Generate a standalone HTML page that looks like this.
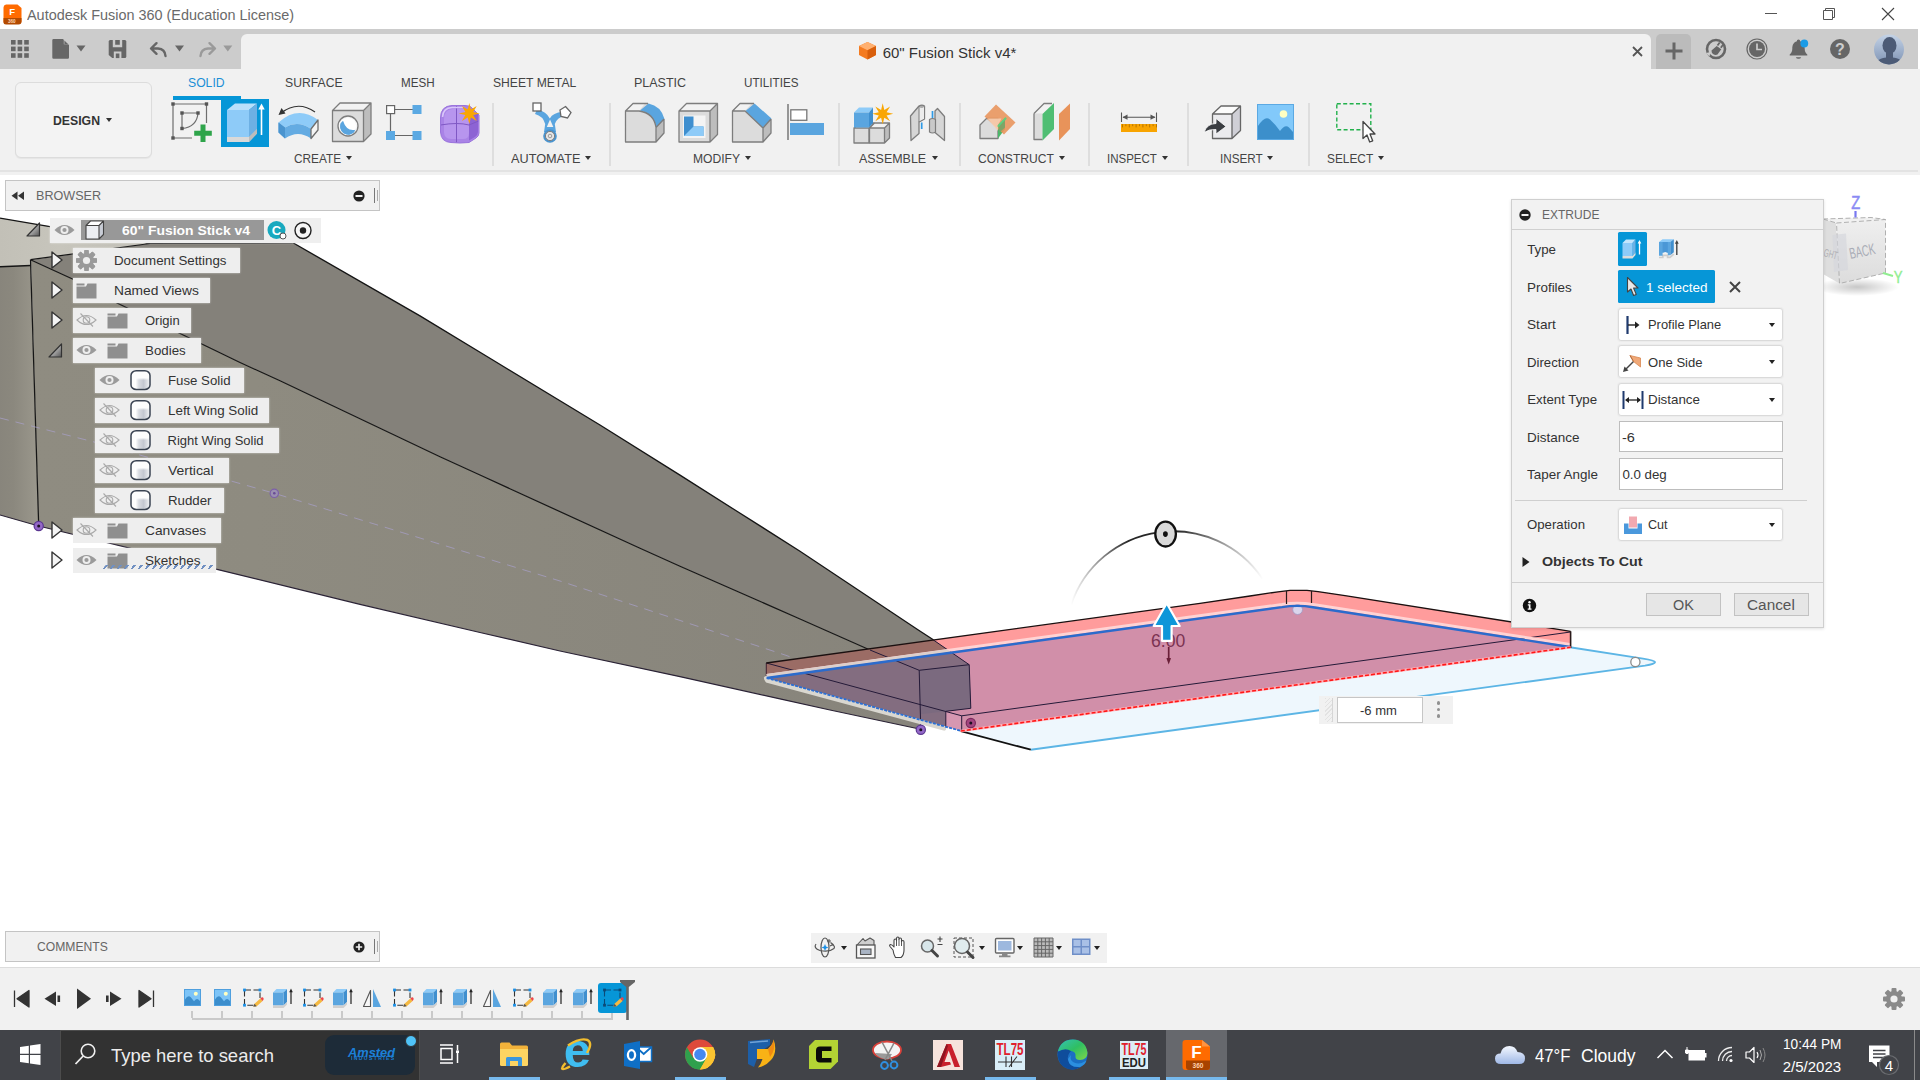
<!DOCTYPE html>
<html lang="en"><head><meta charset="utf-8"><title>Autodesk Fusion 360 (Education License)</title>
<style>
*{box-sizing:border-box;margin:0;padding:0}
html,body{width:1920px;height:1080px;overflow:hidden;background:#fff}
body{position:relative;font-family:"Liberation Sans",Arial,sans-serif;font-size:13px;color:#333}
.abs{position:absolute}
.t{position:absolute;white-space:nowrap;line-height:1}
svg{position:absolute;overflow:visible}
#titlebar{left:0;top:0;width:1920px;height:29px;background:#fff}
#graybar{left:0;top:29px;width:1918px;height:40px;background:#cccccc}
#tab{left:241px;top:34px;width:1410px;height:36px;background:#f1f1f1;border-radius:6px 6px 0 0}
#plusbtn{left:1656px;top:34px;width:35px;height:35px;background:#bbbbbb;border-radius:5px 5px 0 0}
#toolbar{left:0;top:69px;width:1920px;height:106px;background:#f1f1f1}
#tbline{left:0;top:170px;width:1918px;height:2px;background:#e3e3e3}
#design{left:15px;top:82px;width:137px;height:76px;border:1px solid #dcdcdc;border-radius:6px;background:#f3f3f3;box-shadow:0 1px 1px rgba(0,0,0,.05)}
.tabname{position:absolute;top:76px;font-size:13.5px;line-height:14px;color:#444;white-space:nowrap;transform:scaleX(.9);transform-origin:0 50%}
.grp{position:absolute;top:152px;font-size:13.5px;line-height:14px;color:#444;white-space:nowrap;transform:scaleX(.9);transform-origin:0 50%}
.sep{position:absolute;top:103px;width:2px;height:63px;background:#dedede}
.dd{position:absolute;width:0;height:0;margin-left:.3px;border-left:3.7px solid transparent;border-right:3.7px solid transparent;border-top:4.6px solid #333}
#timeline{left:0;top:967px;width:1920px;height:63px;background:#f1f1f1;border-top:1px solid #dcdcdc}
#taskbar{left:0;top:1030px;width:1920px;height:50px;background:#414348}
.panelhdr{position:absolute;background:#f1f1f1;border:1px solid #c4c4c4}
.row{position:absolute;height:25px;background:#eeeeee;box-shadow:0 0 2px rgba(255,255,255,.6)}
.rowt{position:absolute;font-size:13.8px;line-height:16px;color:#333;white-space:nowrap;transform:scaleX(.94);transform-origin:0 50%}
#dlg{left:1511px;top:199px;width:313px;height:429px;background:#f2f2f2;border:1px solid #cfcfcf;box-shadow:0 1px 3px rgba(0,0,0,.12)}
.lbl{position:absolute;left:15px;font-size:13px;line-height:16px;color:#333;white-space:nowrap;transform:scaleX(.96);transform-origin:0 50%}
.ddbox{position:absolute;left:106.3px;width:165px;height:33.4px;background:#fff;border:1px solid #dadada;border-radius:3px;box-shadow:0 0 0 1px #ececec}
  .inbox{position:absolute;left:106.6px;width:164.2px;height:31.6px;background:#fff;border:1px solid #bdbdbd}
.ddt{position:absolute;left:29px;top:8px;font-size:13px;line-height:16px;color:#333;white-space:nowrap;transform:scaleX(.96);transform-origin:0 50%}
.btn{position:absolute;top:393.2px;height:23.2px;background:#e6e6e6;border:1px solid #c2c2c2;font-size:15px;line-height:21px;text-align:center;color:#555}
.tbt{position:absolute;color:#fff;white-space:nowrap}
</style></head>
<body>
<!-- p_scene -->
<svg class="abs" style="left:0;top:0" width="1920" height="1080" viewBox="0 0 1920 1080">
<defs>
<linearGradient id="gTop" x1="0" y1="0" x2="1" y2="0"><stop offset="0" stop-color="#c2c0b7"/><stop offset="0.4" stop-color="#c7c5bc"/><stop offset="1" stop-color="#c0beb5"/></linearGradient>
<linearGradient id="gLow" x1="0" y1="0" x2="1" y2="0"><stop offset="0" stop-color="#8f8c81"/><stop offset="0.25" stop-color="#8e8b80"/><stop offset="1" stop-color="#87847b"/></linearGradient>
<linearGradient id="gLeft" x1="0" y1="0" x2="1" y2="0"><stop offset="0" stop-color="#88857c"/><stop offset="0.35" stop-color="#8b887e"/><stop offset="1" stop-color="#9b988d"/></linearGradient>
<linearGradient id="arcfade" gradientUnits="userSpaceOnUse" x1="1071" y1="0" x2="1263" y2="0"><stop offset="0" stop-color="#000" stop-opacity="0"/><stop offset="0.3" stop-color="#000" stop-opacity=".85"/><stop offset="0.55" stop-color="#000" stop-opacity=".85"/><stop offset="1" stop-color="#000" stop-opacity="0"/></linearGradient>

<clipPath id="cBody"><polygon points="0.0,218.0 50.0,226.6 150.0,243.5 292.5,242.5 420.0,315.8 492.8,360.0 600.0,425.0 680.0,475.1 735.0,510.0 800.0,551.2 918.3,630.0 933.3,639.7 969.2,664.7 970.8,708.3 945.8,711.3 945.8,726.8 921.0,729.7 917.0,728.5 830.0,710.0 780.0,698.9 680.0,676.7 560.0,651.0 480.0,632.5 360.0,604.3 216.0,569.2 38.7,526.0 0.0,515.0"/></clipPath>
<clipPath id="cProfile"><polygon points="766.7,678.0 1297.5,605.0 1570.0,647.0 960.8,730.8"/></clipPath>
</defs>
<polygon points="0.0,264.0 30.7,264.0 38.7,526.0 0.0,515.0" fill="url(#gLeft)"/>
<polygon points="0.0,218.0 50.0,226.6 150.0,243.5 30.5,259.7 30.7,265.6 0.0,266.8" fill="url(#gTop)"/>
<polygon points="31.0,260.0 150.0,243.5 292.5,242.5 420.0,315.8 492.8,360.0 600.0,425.0 680.0,475.1 735.0,510.0 800.0,551.2 918.3,630.0 933.3,639.7 969.2,664.7 919.2,670.3 896.7,661.7 870.0,650.0 800.0,619.0 680.0,566.2 640.0,548.3 480.0,475.0 440.0,456.7 280.0,380.8 240.0,362.5 208.0,347.0 117.0,303.0 72.5,279.0 31.0,260.0" fill="#84817a"/>
<polygon points="31.0,260.0 72.5,279.0 117.0,303.0 208.0,347.0 240.0,362.5 280.0,380.8 440.0,456.7 480.0,475.0 640.0,548.3 680.0,566.2 800.0,619.0 870.0,650.0 896.7,661.7 919.2,670.3 920.8,729.7 921.0,729.7 917.0,728.5 830.0,710.0 780.0,698.9 680.0,676.7 560.0,651.0 480.0,632.5 360.0,604.3 216.0,569.2 38.7,526.0" fill="url(#gLow)"/>
<polyline points="292.5,242.5 420.0,315.8 492.8,360.0 600.0,425.0 680.0,475.1 735.0,510.0 800.0,551.2 918.3,630.0 933.3,639.7" fill="none" stroke="#151515" stroke-width="1.35"/>
<polyline points="31.0,260.0 72.5,279.0 117.0,303.0 208.0,347.0 240.0,362.5 280.0,380.8 440.0,456.7 480.0,475.0 640.0,548.3 680.0,566.2 800.0,619.0 870.0,650.0" fill="none" stroke="#151515" stroke-width="1.25"/>
<polyline points="0.0,515.0 38.7,526.0 216.0,569.2 360.0,604.3 480.0,632.5 560.0,651.0 680.0,676.7 780.0,698.9 830.0,710.0 917.0,728.5 921.0,729.7" fill="none" stroke="#2a2235" stroke-width="1.2"/>
<polyline points="0.0,218.0 50.0,226.6 150.0,243.5 30.5,259.7" fill="none" stroke="#151515" stroke-width="1.25"/>
<polyline points="0.0,266.8 30.7,265.6" fill="none" stroke="#151515" stroke-width="1.5"/>
<polyline points="30.5,259.7 38.7,526.0" fill="none" stroke="#151515" stroke-width="1.25"/>
<polyline points="150.0,243.5 292.5,243.0" fill="none" stroke="#222" stroke-width="1.2"/>
<polyline points="0.0,418.0 93.0,441.7 274.3,493.3 560.0,581.0 785.0,655.0 895.0,695.0 940.0,712.0" fill="none" stroke="#a79fc6" stroke-opacity=".75" stroke-width="1" stroke-dasharray="9 7"/>
<circle cx="274.3" cy="493.3" r="4.2" fill="#9a8fb0" stroke="#7c5fa8" stroke-width="1.2"/><circle cx="274.3" cy="493.3" r="1.3" fill="#6a4c96"/>
<path d="M960.8,731 L1570,647.3 L1643,658.6 Q1666,662 1645,665.6 L1030.8,749.7 Z" fill="#eef7fd"/>
<path d="M1570,647.3 L1643,658.6 Q1666,662 1645,665.6 L1030.8,749.7" fill="none" stroke="#5cb5e5" stroke-width="1.9"/>
<line x1="960.8" y1="731.2" x2="1030.8" y2="749.7" stroke="#111" stroke-width="1.8"/>
<circle cx="1635.4" cy="662" r="4.6" fill="#fff" stroke="#8a8a8a" stroke-width="1.3"/>
<polygon points="766.3,663.0 1200.0,603.3 1250.0,596.0 1278.0,591.8 1290.0,590.4 1307.0,590.4 1318.0,591.6 1345.0,595.6 1570.6,631.3 1570.0,647.0 1297.5,605.0 766.7,678.0" fill="#ff9c9c"/>
<polygon points="766.7,678.0 1297.5,605.0 1570.0,647.0 960.8,730.8" fill="#d18fa9"/>
<g clip-path="url(#cBody)">
<polygon points="766.3,663.0 1200.0,603.3 1250.0,596.0 1278.0,591.8 1290.0,590.4 1307.0,590.4 1318.0,591.6 1345.0,595.6 1570.6,631.3 1570.0,647.0 1297.5,605.0 766.7,678.0" fill="#9b6c65"/>
<polygon points="766.7,678.0 1297.5,605.0 1570.0,647.0 960.8,730.8" fill="#836d80"/>
</g>
<polygon points="919.2,670.3 969.2,664.7 970.8,708.3 945.8,711.3 920.0,714.3" fill="#7b6a7f"/>
<polygon points="945.8,711.3 961.7,715.8 961.7,730.5 945.8,726.0" fill="#d697b1"/>
<polyline points="933.0,639.7 969.2,664.7 970.8,708.3 945.8,711.3" fill="none" stroke="#241a38" stroke-width="1"/>
<polyline points="870.0,650.0 919.2,670.3 969.2,664.7" fill="none" stroke="#241a38" stroke-width="1"/>
<polyline points="919.2,670.3 920.8,729.7" fill="none" stroke="#241a38" stroke-width="1"/>
<polyline points="945.8,711.3 945.8,726.0" fill="none" stroke="#241a38" stroke-width="1"/>
<polyline points="961.7,715.8 961.7,730.5" fill="none" stroke="#241a38" stroke-width="1"/>
<polyline points="766.3,663.0 961.7,715.8 1570.6,632.0" fill="none" stroke="#241a38" stroke-width="1"/>
<polyline points="766.3,663.0 766.3,677.0" fill="none" stroke="#3a2030" stroke-width="1"/>
<path d="M766.7,678 L1282,607.1 Q1297.5,604.6 1313,607.2 L1570,647" fill="none" stroke="#ffd3d3" stroke-width="3" transform="translate(0,-2.6)"/>
<g clip-path="url(#cBody)"><polyline points="766.7,675.6 1297.5,602.6" fill="none" stroke="#dccfcb" stroke-width="3.2"/></g>
<polyline points="766.2,678.3 767.5,680.6 921.0,722.0 944.0,728.3" fill="none" stroke="#d9d7d0" stroke-width="4.6" stroke-linecap="round" stroke-linejoin="round"/>
<circle cx="1297.6" cy="609.6" r="4.9" fill="#dad5ec" stroke="#a79bc4" stroke-width=".9"/>
<path d="M766.7,678 L1282,607.1 Q1297.5,604.6 1313,607.2 L1570,647" fill="none" stroke="#2b6bcc" stroke-width="2.4" stroke-linejoin="round"/>
<polyline points="766.7,678.0 960.8,730.8" fill="none" stroke="#2b6fd4" stroke-width="1.8" stroke-dasharray="3 1.2"/>
<polyline points="766.3,663.0 1200.0,603.3 1250.0,596.0 1278.0,591.8 1290.0,590.4 1307.0,590.4 1318.0,591.6 1345.0,595.6 1570.6,631.3" fill="none" stroke="#1a1010" stroke-width="1.3" stroke-linejoin="round"/>
<line x1="1286.5" y1="591" x2="1286.5" y2="604" stroke="#2a1a1a" stroke-width="1.2"/><line x1="1311.5" y1="591" x2="1311.5" y2="603" stroke="#2a1a1a" stroke-width="1.2"/>
<line x1="1570.6" y1="631.3" x2="1570.6" y2="648" stroke="#2a1a1a" stroke-width="1.6"/>
<line x1="960.8" y1="731" x2="1570.6" y2="647.3" stroke="#ffb0b8" stroke-width="2.6"/>
<line x1="960.8" y1="731" x2="1570.6" y2="647.3" stroke="#ff1818" stroke-width="1.6" stroke-dasharray="4 2"/>
<circle cx="38.7" cy="526" r="4.6" fill="#9468c8" stroke="#5a3590" stroke-width="1.2"/><circle cx="38.7" cy="526" r="1.5" fill="#1a1020"/>
<circle cx="920.8" cy="729.7" r="4.6" fill="#9468c8" stroke="#5a3590" stroke-width="1.2"/><circle cx="920.8" cy="729.7" r="1.5" fill="#1a1020"/>
<circle cx="970.8" cy="723" r="4.6" fill="#a2457f" stroke="#7a2a5c" stroke-width="1.2"/><circle cx="970.8" cy="723" r="1.5" fill="#1a1020"/>
<path d="M1071,605 A107.7,107.7 0 0 1 1262.5,578.8" fill="none" stroke="url(#arcfade)" stroke-width="1.8"/>
<ellipse cx="1165.6" cy="534.1" rx="10.3" ry="12.4" fill="#d9d9d9" stroke="#111" stroke-width="2.3"/><ellipse cx="1165.4" cy="534.1" rx="2.4" ry="2.8" fill="#111"/>
<text x="1151" y="646.8" font-family="Liberation Sans,Arial,sans-serif" font-size="17.6" fill="#7b3352">6.00</text>
<path d="M1168.7,647 L1168.7,661.5 M1167.2,658 L1168.7,662 L1170.2,658" stroke="#6a1f38" stroke-width="1.7" fill="none"/>
<path d="M1166.7,603.2 L1179.7,626 L1171.6,626 L1171.6,640.8 L1162,640.8 L1162,626 L1153.7,626 Z" fill="#0e96d9" stroke="#fff" stroke-width="2.2" stroke-linejoin="round"/>
</svg>
<div class="abs" style="left:1319px;top:696.1px;width:134px;height:27.7px;background:#f1f1f1"></div>
<div class="abs" style="left:1324.5px;top:698px;width:8.5px;height:24px;background:repeating-linear-gradient(135deg,#e2e2e2 0 1px,#f1f1f1 1px 3px);border-right:1.6px solid #d6d6d6"></div>
<div class="abs" style="left:1336.7px;top:697.2px;width:86.3px;height:25.6px;background:#fff;border:1.2px solid #c6c6c6"></div>
<div class="t" style="left:1360.20px;top:703.56px;font-size:13.6px;color:#333;transform:scaleX(0.9603);transform-origin:0 50%;">-6 mm</div>
<div class="abs" style="left:1436.7px;top:701.2px;width:3.6px;height:3.6px;border-radius:50%;background:#919191"></div>
<div class="abs" style="left:1436.7px;top:707.7px;width:3.6px;height:3.6px;border-radius:50%;background:#919191"></div>
<div class="abs" style="left:1436.7px;top:714.2px;width:3.6px;height:3.6px;border-radius:50%;background:#919191"></div>
<!-- p_chrome -->
<div class="abs" id="titlebar"></div>
<svg class="abs" style="left:3px;top:4px" width="19" height="21" viewBox="0 0 19 21"><path d="M3,0.5 h11.5 l4,3.5 v13 a3,3 0 0 1 -3,3 h-12.5 a2.5,2.5 0 0 1 -2.5,-2.5 v-14 a3,3 0 0 1 2.5,-3 z" fill="#ff6b00"/><path d="M0.5,14 h18 v3.5 a3,3 0 0 1 -3,3 h-12.5 a2.5,2.5 0 0 1 -2.5,-2.5 z" fill="#b34a00"/><text x="6.2" y="11" font-family="Liberation Sans,Arial,sans-serif" font-size="9.5" font-weight="bold" fill="#fff">F</text><text x="5" y="19.3" font-family="Liberation Sans,Arial,sans-serif" font-size="4.6" font-weight="bold" fill="#ffd9b8">360</text></svg>
<div class="t" style="left:27.00px;top:7.23px;font-size:15.5px;color:#6a6a6a;transform:scaleX(0.9305);transform-origin:0 50%;">Autodesk Fusion 360 (Education License)</div>
<svg class="abs" style="left:1760px;top:4px" width="140" height="20" viewBox="0 0 140 20"><path d="M5,9.5 h12" stroke="#555" stroke-width="1"/><path d="M63.5,6.5 h9 v9 h-9 z M65.5,6.5 v-2 h9 v9 h-2" fill="none" stroke="#555" stroke-width="1"/><path d="M122,4 l12,12 M134,4 l-12,12" stroke="#444" stroke-width="1.1"/></svg>
<div class="abs" id="graybar"></div>
<div class="abs" id="tab"></div>
<div class="abs" id="plusbtn"></div>
<svg class="abs" style="left:0px;top:0px" width="250" height="70" viewBox="0 0 250 70"><rect x="11.0" y="40.0" width="4.6" height="4.6" fill="#666"/><rect x="11.0" y="46.6" width="4.6" height="4.6" fill="#666"/><rect x="11.0" y="53.2" width="4.6" height="4.6" fill="#666"/><rect x="17.6" y="40.0" width="4.6" height="4.6" fill="#666"/><rect x="17.6" y="46.6" width="4.6" height="4.6" fill="#666"/><rect x="17.6" y="53.2" width="4.6" height="4.6" fill="#666"/><rect x="24.2" y="40.0" width="4.6" height="4.6" fill="#666"/><rect x="24.2" y="46.6" width="4.6" height="4.6" fill="#666"/><rect x="24.2" y="53.2" width="4.6" height="4.6" fill="#666"/><path d="M53.5,39 h9.5 l6,6 v12.5 a1.2,1.2 0 0 1 -1.2,1.2 h-14.3 a1.2,1.2 0 0 1 -1.2,-1.2 v-17.3 a1.2,1.2 0 0 1 1.2,-1.2 z" fill="#666"/><path d="M63.8,39.3 v5 h5 z" fill="#ccc"/><path d="M64.4,40.4 v3.6 h3.6 z" fill="#666"/><path d="M76.5,45.5 h9 l-4.5,6 z" fill="#666"/><path d="M110.2,40 h14.6 a1.5,1.5 0 0 1 1.5,1.5 v15 a1.5,1.5 0 0 1 -1.5,1.5 h-12.6 l-3.5,-3 v-13.5 a1.5,1.5 0 0 1 1.5,-1.5 z" fill="#666"/><path d="M112.8,40 v7.2 h9.4 v-7.2 h-2.4 v4.8 h-4.6 v-4.8 z" fill="#ccc"/><rect x="113.8" y="51.5" width="7.6" height="6.6" fill="#ccc"/><rect x="115.8" y="53.5" width="3.6" height="4.6" fill="#666"/><path d="M156.5,43.2 l-5.5,5.3 l5.5,5.3 M151.5,48.5 h6.5 q7,0.5 7.5,7.5" fill="none" stroke="#666" stroke-width="2.4" stroke-linecap="round" stroke-linejoin="round"/><path d="M175,45.5 h9 l-4.5,6 z" fill="#666"/><path d="M209.5,43.2 l5.5,5.3 l-5.5,5.3 M214.5,48.5 h-6.5 q-7,0.5 -7.5,7.5" fill="none" stroke="#9a9a9a" stroke-width="2.4" stroke-linecap="round" stroke-linejoin="round"/><path d="M223.3,45.5 h9 l-4.5,6 z" fill="#9a9a9a"/></svg>
<svg class="abs" style="left:858px;top:41px" width="20" height="20" viewBox="0 0 20 20"><polygon points="9.5,1 18,5 18,14 9.5,18.5 1,14 1,5" fill="#f47b20"/><polygon points="9.5,1 18,5 9.5,9.3 1,5" fill="#ffb070"/><polygon points="9.5,9.3 18,5 18,14 9.5,18.5" fill="#d85f0c"/></svg>
<div class="t" style="left:882.70px;top:44.67px;font-size:15px;color:#333;">60&quot; Fusion Stick v4*</div>
<svg class="abs" style="left:1630px;top:44px" width="15" height="15" viewBox="0 0 15 15"><path d="M3,3 l9,9 M12,3 l-9,9" stroke="#555" stroke-width="1.8"/></svg>
<svg class="abs" style="left:1664px;top:41px" width="20" height="20" viewBox="0 0 20 20"><path d="M10,1.5 v17 M1.5,10 h17" stroke="#666" stroke-width="3"/></svg>
<svg class="abs" style="left:1704px;top:37px" width="24" height="24" viewBox="0 0 24 24"><circle cx="12" cy="12" r="9" fill="none" stroke="#666" stroke-width="2.6"/><path d="M7.5,13.5 a4.2,4.2 0 0 0 6,4 l3.8,-5.2 l-4.6,-3.4 z" fill="#666"/><path d="M13.5,8.5 l2.2,-3 M16.8,10.8 l2.2,-3" stroke="#666" stroke-width="1.8"/><path d="M2,16 l4.5,-1 l-1,4.5 z" fill="#ccc"/></svg>
<svg class="abs" style="left:1745px;top:37px" width="24" height="24" viewBox="0 0 24 24"><circle cx="12" cy="12" r="10" fill="none" stroke="#666" stroke-width="1.2"/><circle cx="12" cy="12" r="8" fill="#666"/><path d="M12,6.5 v6 h5" fill="none" stroke="#ccc" stroke-width="1.7"/></svg>
<svg class="abs" style="left:1786px;top:37px" width="26" height="26" viewBox="0 0 26 26"><path d="M12.5,2.5 a1.6,1.6 0 0 1 1.6,1.8 c3.5,1 4.6,4 4.6,7.5 c0,3 1.2,4.4 2.6,5.6 v1.2 h-17.6 v-1.2 c1.4,-1.200 2.600,-2.600 2.600,-5.600 c0,-3.500 1.100,-6.500 4.600,-7.500 a1.600,1.600 0 0 1 1.600,-1.800 z" fill="#666"/><path d="M9.8,20.200 a2.800,2.200 0 0 0 5.400,0 z" fill="#666"/><circle cx="18.300" cy="6.500" r="3.900" fill="#1b9be6"/></svg>
<svg class="abs" style="left:1828px;top:37px" width="24" height="24" viewBox="0 0 24 24"><circle cx="12" cy="12" r="10" fill="#666"/><text x="12" y="17.600" text-anchor="middle" font-family="Liberation Sans,Arial,sans-serif" font-weight="bold" font-size="16" fill="#ccc">?</text></svg>
<svg class="abs" style="left:1873px;top:34px" width="32" height="32" viewBox="0 0 32 32"><defs><linearGradient id="av" x1="0" y1="0" x2="0" y2="1"><stop offset="0" stop-color="#c3d2e6"/><stop offset="1" stop-color="#7e93b4"/></linearGradient><clipPath id="avc"><circle cx="16" cy="15.500" r="15"/></clipPath></defs><circle cx="16" cy="15.500" r="15" fill="url(#av)"/><g clip-path="url(#avc)"><ellipse cx="16.500" cy="11.500" rx="7" ry="8.500" fill="#4c5b76"/><rect x="13" y="17" width="7" height="8" fill="#4c5b76"/><path d="M3,32 c0,-7 6,-8.500 13.500,-8.500 s13.500,1.500 13.500,8.500 z" fill="#4c5b76"/></g></svg>
<div class="abs" id="toolbar"></div><div class="abs" id="tbline"></div>
<div class="abs" id="design"></div>
<div class="t" style="left:53.00px;top:113.61px;font-size:13.5px;color:#333;font-weight:bold;transform:scaleX(0.9081);transform-origin:0 50%;">DESIGN</div>
<div class="dd" style="left:106px;top:118px;border-top-color:#333"></div>
<div class="t" style="left:188.30px;top:76.21px;font-size:13.5px;color:#1a8fd6;transform:scaleX(0.9025);transform-origin:0 50%;">SOLID</div>
<div class="t" style="left:285.40px;top:76.21px;font-size:13.5px;color:#444;transform:scaleX(0.9028);transform-origin:0 50%;">SURFACE</div>
<div class="t" style="left:401.30px;top:76.21px;font-size:13.5px;color:#444;transform:scaleX(0.8637);transform-origin:0 50%;">MESH</div>
<div class="t" style="left:493.00px;top:76.21px;font-size:13.5px;color:#444;transform:scaleX(0.8996);transform-origin:0 50%;">SHEET METAL</div>
<div class="t" style="left:633.80px;top:76.21px;font-size:13.5px;color:#444;transform:scaleX(0.9245);transform-origin:0 50%;">PLASTIC</div>
<div class="t" style="left:743.80px;top:76.21px;font-size:13.5px;color:#444;transform:scaleX(0.8649);transform-origin:0 50%;">UTILITIES</div>
<div class="abs" style="left:172.5px;top:95.500px;width:68px;height:4px;background:#0696d7"></div>
<div class="abs" style="left:221px;top:99px;width:48px;height:47.500px;background:#0696d7"></div>
<div class="t" style="left:294.40px;top:152.31px;font-size:13.5px;color:#444;transform:scaleX(0.8755);transform-origin:0 50%;">CREATE</div>
<div class="dd" style="left:346px;top:156px;border-top-color:#333"></div>
<div class="t" style="left:511.00px;top:152.31px;font-size:13.5px;color:#444;transform:scaleX(0.9404);transform-origin:0 50%;">AUTOMATE</div>
<div class="dd" style="left:585px;top:156px;border-top-color:#333"></div>
<div class="t" style="left:692.50px;top:152.31px;font-size:13.5px;color:#444;transform:scaleX(0.8965);transform-origin:0 50%;">MODIFY</div>
<div class="dd" style="left:745px;top:156px;border-top-color:#333"></div>
<div class="t" style="left:859.20px;top:152.31px;font-size:13.5px;color:#444;transform:scaleX(0.9230);transform-origin:0 50%;">ASSEMBLE</div>
<div class="dd" style="left:931.5px;top:156px;border-top-color:#333"></div>
<div class="t" style="left:978.00px;top:152.31px;font-size:13.5px;color:#444;transform:scaleX(0.8956);transform-origin:0 50%;">CONSTRUCT</div>
<div class="dd" style="left:1059px;top:156px;border-top-color:#333"></div>
<div class="t" style="left:1106.70px;top:152.31px;font-size:13.5px;color:#444;transform:scaleX(0.8518);transform-origin:0 50%;">INSPECT</div>
<div class="dd" style="left:1161.5px;top:156px;border-top-color:#333"></div>
<div class="t" style="left:1220.30px;top:152.31px;font-size:13.5px;color:#444;transform:scaleX(0.8649);transform-origin:0 50%;">INSERT</div>
<div class="dd" style="left:1267px;top:156px;border-top-color:#333"></div>
<div class="t" style="left:1326.70px;top:152.31px;font-size:13.5px;color:#444;transform:scaleX(0.8792);transform-origin:0 50%;">SELECT</div>
<div class="dd" style="left:1377.5px;top:156px;border-top-color:#333"></div>
<div class="sep" style="left:491.5px"></div>
<div class="sep" style="left:609px"></div>
<div class="sep" style="left:838px"></div>
<div class="sep" style="left:959px"></div>
<div class="sep" style="left:1088px"></div>
<div class="sep" style="left:1187px"></div>
<div class="sep" style="left:1308px"></div>
<svg class="abs" style="left:170px;top:101px" width="46" height="46" viewBox="0 0 46 46"><path d="M3,3 H36.500 M3,3 V37 M36.500,3 V22 M3,37 H22" fill="none" stroke="#6e6e6e" stroke-width="1.200"/><path d="M12,12 H28 M12,12 V27.500 M28,12 Q27,26 12,27.500" fill="none" stroke="#6e6e6e" stroke-width="1.200"/><rect x="1.3" y="1.3" width="3.400" height="3.400" fill="#555"/><rect x="34.8" y="1.3" width="3.400" height="3.400" fill="#555"/><rect x="1.3" y="35.3" width="3.400" height="3.400" fill="#555"/><rect x="10.3" y="10.3" width="3.400" height="3.400" fill="#555"/><rect x="26.3" y="10.3" width="3.400" height="3.400" fill="#555"/><rect x="10.3" y="25.8" width="3.400" height="3.400" fill="#555"/><path d="M30.500,23.500 h5 v6.300 h6.300 v5 h-6.300 v6.300 h-5 v-6.300 h-6.300 v-5 h6.300 z" fill="#2ea44a"/></svg>
<svg class="abs" style="left:221px;top:99px" width="48" height="48" viewBox="0 0 48 48"><polygon points="6,11 14,4.500 36,4.500 28,11" fill="#b9e0fb"/><polygon points="28,11 36,4.500 36,30 28,38" fill="#6db0e4"/><rect x="6" y="11" width="22" height="27" fill="#8ecbf8"/><polygon points="6,38 28,38 36,30 36,34.500 28,43 6,43" fill="#d9d9d9"/><polygon points="28,38 36,30 36,34.500 28,43" fill="#bcbcbc"/><path d="M40.500,36 V9" stroke="#fff" stroke-width="1.600"/><path d="M37.300,10.500 L40.500,4.500 L43.700,10.500 Z" fill="#fff"/></svg>
<svg class="abs" style="left:276px;top:103px" width="46" height="40" viewBox="0 0 46 40"><path d="M5,10 Q22,-3 39,9" fill="none" stroke="#333" stroke-width="1.200"/><path d="M2.500,12 L9.500,10.500 L5.500,5 Z" fill="#333"/><path d="M2.500,19.500 Q22,2 42,17 L35,26 Q22,17 9,24.500 Z" fill="#8ecbf8"/><path d="M2.500,19.500 L9,24.500 Q22,17 35,26 L35,35.500 Q22,26.500 9,35.500 L2.500,29.500 Z" fill="#64abe2"/><path d="M2.500,19.500 L9,24.500 V35.500 L2.500,29.500 Z" fill="#4a94cf"/><path d="M35,26 L42,17 V27 L35,35.500 Z" fill="#f4f4f4" stroke="#6e6e6e" stroke-width="1.300" stroke-linejoin="round"/></svg>
<svg class="abs" style="left:330px;top:100px" width="46" height="46" viewBox="0 0 46 46"><polygon points="2.5,10.5 10.0,3.0 41.0,3.0 33.5,10.5" fill="#f2f2f2"/><polygon points="33.5,10.5 41.0,3.0 41.0,34.0 33.5,41.5" fill="#bdbdbd"/><rect x="2.5" y="10.5" width="31" height="31" fill="#dcdcdc"/><path d="M2.5,10.5 h31 v31 h-31 Z M2.5,10.5 l7.5,-7.5 h31 l-7.5,7.5 M41.0,3.0 v31 l-7.5,7.5" fill="none" stroke="#7d7d7d" stroke-width="1.3" stroke-linejoin="round"/><circle cx="18" cy="26" r="10" fill="#f6f6f6" stroke="#7d7d7d" stroke-width="1.300"/><circle cx="18" cy="26" r="8" fill="#fff"/><path d="M11.500,21.500 a8,8 0 0 0 13.800,9.500 a9,9 0 0 1 -13.800,-9.500 z" fill="#5aa5df"/><path d="M11,23 a7.600,7.600 0 0 0 14.500,6.800 q-9,2 -12.500,-9 z" fill="#5aa5df"/></svg>
<svg class="abs" style="left:384px;top:103px" width="40" height="40" viewBox="0 0 40 40"><path d="M6.500,6.500 H33 M6.500,6.500 V32.500 M6.500,32.500 H33" fill="none" stroke="#666" stroke-width="1.200"/><rect x="2.600" y="2.600" width="8" height="8" fill="#fff" stroke="#666" stroke-width="1.200"/><rect x="28.500" y="2" width="9" height="9" fill="#5ba9e3"/><rect x="2" y="28" width="9" height="9" fill="#5ba9e3"/><rect x="28.500" y="28" width="9" height="9" fill="#5ba9e3"/></svg>
<svg class="abs" style="left:438px;top:100px" width="46" height="46" viewBox="0 0 46 46"><path d="M2.500,18 Q2.500,6 14,5.500 L27,5.500 Q33,5.500 35,9 L41,15 L41,33 Q41,36 38,38 L31,42.500 Q22,43.500 13,42.500 Q3,42 2.500,32 Z" fill="#a983e6"/><path d="M6,19 Q6,9.500 15,9 L27,9 Q31,9.500 31,14 L31,33 Q31,39 25,39 L13,39 Q6,39 6,32 Z" fill="#b795ee"/><path d="M31,17 L40,13 L40,32 Q40,35 37,37 L31,40.500 Z" fill="#8d63d4"/><path d="M18.500,6 V42.500 M2.500,25 Q20,22 31,25 L40.500,21" fill="none" stroke="#7f58c4" stroke-width="1"/><path d="M4.500,17 Q5,8 14,7.500 L25,7.500" fill="none" stroke="#d9c6fa" stroke-width="1.600"/><path d="M2.500,18 Q2.500,6 14,5.500 L27,5.500 Q33,5.500 35,9 L41,15 L41,33 Q41,36 38,38 L31,42.500 Q22,43.500 13,42.500 Q3,42 2.500,32 Z" fill="none" stroke="#9a74dc" stroke-width="1"/><polygon points="31.3,3.0 32.9,9.6 38.7,6.1 35.2,11.9 41.8,13.5 35.2,15.1 38.7,20.9 32.9,17.4 31.3,24.0 29.7,17.4 23.9,20.9 27.4,15.1 20.8,13.5 27.4,11.9 23.9,6.1 29.7,9.6" fill="#f9a602"/></svg>
<svg class="abs" style="left:530px;top:100px" width="46" height="46" viewBox="0 0 46 46"><path d="M7,9.500 Q16.500,11.500 19.800,18.500 Q23,12.500 32.500,12 L34.500,16 Q27,17.500 24.800,24 L26,32 H14 L15.200,24 Q13,16 5,14 Z" fill="#5aa5df"/><path d="M20,19.500 L23.300,27 L16.800,27 Z" fill="#f1f1f1"/><circle cx="20" cy="36" r="6.800" fill="#4a94cf"/><circle cx="20" cy="36" r="4.600" fill="#e6e6e6" stroke="#7d7d7d" stroke-width="1"/><circle cx="20" cy="36" r="1.800" fill="none" stroke="#888" stroke-width=".8"/><rect x="3" y="3" width="8" height="8" fill="#fff" stroke="#666" stroke-width="1.300"/><polygon points="35.500,6.500 41,12.500 37.500,18 31,16.500 30,10" fill="#fff" stroke="#666" stroke-width="1.300"/></svg>
<svg class="abs" style="left:623px;top:100px" width="46" height="46" viewBox="0 0 46 46"><polygon points="2.500,11 10,3.500 26,3.500 41,18 41,33 33,42 2.500,42" fill="#dcdcdc"/><polygon points="33,27 41,18 41,33 33,42" fill="#bdbdbd"/><polygon points="2.500,11 10,3.500 22,3.500 16,11" fill="#f2f2f2"/><path d="M17,10.500 L25.500,3.500 Q38,6 41.500,19 L33.500,27.500 Q31,14 17,10.500 Z" fill="#5aa5df"/><path d="M2.500,11 L10,3.500 H25 M41,19 V33 L33,42 H2.500 V11 H16 Q31,13 33,27.500 V42 M33,27.500 L41,19" fill="none" stroke="#7d7d7d" stroke-width="1.300" stroke-linejoin="round"/></svg>
<svg class="abs" style="left:676px;top:100px" width="46" height="46" viewBox="0 0 46 46"><polygon points="3,11 10.5,3.5 41.5,3.5 34,11" fill="#f2f2f2"/><polygon points="34,11 41.5,3.5 41.5,34.5 34,42" fill="#bdbdbd"/><rect x="3" y="11" width="31" height="31" fill="#dcdcdc"/><path d="M3,11 h31 v31 h-31 Z M3,11 l7.5,-7.5 h31 l-7.5,7.5 M41.5,3.5 v31 l-7.5,7.5" fill="none" stroke="#7d7d7d" stroke-width="1.3" stroke-linejoin="round"/><rect x="7" y="15.500" width="22.500" height="22.500" fill="#f4f4f4"/><polygon points="8,16.500 17.500,16.500 17.500,26.500 27.500,26.500 27.500,36 8,36" fill="#3f8fcf"/><polygon points="8,36 17.500,26.500 27.500,26.500 27.500,36" fill="#8ecbf8"/></svg>
<svg class="abs" style="left:730px;top:100px" width="46" height="46" viewBox="0 0 46 46"><polygon points="2.500,11 10,3.500 23,3.500 41,19 41,33 33,42 2.500,42" fill="#dcdcdc"/><polygon points="33,28 41,19 41,33 33,42" fill="#bdbdbd"/><polygon points="2.500,11 10,3.500 22,3.500 14.500,11" fill="#f2f2f2"/><polygon points="15.500,11 24.500,3.500 41.500,18.500 32.500,28" fill="#5aa5df"/><path d="M2.500,11 L10,3.500 H24 M41,19 V33 L33,42 H2.500 V11 H15 L33,28 V42 M33,28 L41,19" fill="none" stroke="#7d7d7d" stroke-width="1.300" stroke-linejoin="round"/></svg>
<svg class="abs" style="left:785px;top:102px" width="42" height="42" viewBox="0 0 42 42"><path d="M3,2 V38" stroke="#777" stroke-width="1.500"/><rect x="5.800" y="7.800" width="16" height="10.500" fill="#fff" stroke="#777" stroke-width="1.300"/><rect x="5" y="21" width="34" height="12" fill="#5aa5df"/></svg>
<svg class="abs" style="left:851px;top:99px" width="46" height="46" viewBox="0 0 46 46"><polygon points="3,29 8,24 23,24 18,29" fill="#f2f2f2"/><polygon points="18,29 23,24 23,39 18,44" fill="#bdbdbd"/><rect x="3" y="29" width="15" height="15" fill="#dcdcdc"/><path d="M3,29 h15 v15 h-15 Z M3,29 l5,-5 h15 l-5,5 M23,24 v15 l-5,5" fill="none" stroke="#7d7d7d" stroke-width="1.3" stroke-linejoin="round"/><polygon points="18.5,29 23.5,24 38.5,24 33.5,29" fill="#f2f2f2"/><polygon points="33.5,29 38.5,24 38.5,39 33.5,44" fill="#bdbdbd"/><rect x="18.5" y="29" width="15" height="15" fill="#dcdcdc"/><path d="M18.5,29 h15 v15 h-15 Z M18.5,29 l5,-5 h15 l-5,5 M38.5,24 v15 l-5,5" fill="none" stroke="#7d7d7d" stroke-width="1.3" stroke-linejoin="round"/><polygon points="3,13.500 8,8.500 22,8.500 18,13.500" fill="#8ecbf8"/><polygon points="18,13.500 22,8.500 22,24 18,28.500" fill="#3f8fcf"/><rect x="3" y="13.500" width="15" height="15" fill="#5aa5df"/><polygon points="31.7,4.3 33.3,10.9 39.1,7.4 35.6,13.2 42.2,14.8 35.6,16.4 39.1,22.2 33.3,18.7 31.7,25.3 30.1,18.7 24.3,22.2 27.8,16.4 21.2,14.8 27.8,13.2 24.3,7.4 30.1,10.9" fill="#f9a602"/></svg>
<svg class="abs" style="left:908px;top:102px" width="40" height="42" viewBox="0 0 40 42"><path d="M2.500,14 L11,4 Q14,2.500 16.500,4 V17 L11,20 V31.500 L3,38.500 Z" fill="#d6d6d6" stroke="#7d7d7d" stroke-width="1.300" stroke-linejoin="round"/><path d="M11,4.500 Q14,3 16.500,4.500 V17 L11,20 Z" fill="#ececec" stroke="#7d7d7d" stroke-width="1"/><ellipse cx="13.700" cy="5" rx="2" ry="1" fill="#aaa"/><path d="M27,9 L29.500,6.500 L36.500,14.500 V38.500 L27,30.500 Z" fill="#d6d6d6" stroke="#7d7d7d" stroke-width="1.300" stroke-linejoin="round"/><path d="M21.500,17.500 Q24.500,15.500 27.500,17.500 V30 Q24.500,32 21.500,30 Z" fill="#c9c9c9" stroke="#7d7d7d" stroke-width="1.200"/><path d="M13.700,20.500 V27 M24.500,9 V16" stroke="#2f9ae6" stroke-width="1.700"/></svg>
<svg class="abs" style="left:977px;top:101px" width="42" height="42" viewBox="0 0 42 42"><polygon points="3,24 9.500,17.500 21,17.500 21,37.500 3,37.500" fill="#dcdcdc" stroke="#7d7d7d" stroke-width="1.300" stroke-linejoin="round"/><polygon points="21,25 28,17 28,28 21,37.500" fill="#49b86a"/><polygon points="19,3.500 38.500,21.500 27,33.500 7.500,15.500" fill="#e8935a" fill-opacity=".88"/><polygon points="10.500,17.500 24.500,17.500 21,24 21,30" fill="#f6cdb0" fill-opacity=".9"/><path d="M21.500,25 L28.500,17.500" stroke="#5ed07f" stroke-width="2.200" stroke-linecap="round"/><polygon points="21.500,26 28,19 28,26.500 22,32" fill="#6aa86a" fill-opacity=".8"/></svg>
<svg class="abs" style="left:1031px;top:100px" width="44" height="44" viewBox="0 0 44 44"><polygon points="3,13.500 13,3.500 21,3.500 11.500,13.500" fill="#f2f2f2"/><rect x="3" y="13.500" width="8.500" height="26" fill="#dcdcdc"/><path d="M3,13.500 L13,3.500 H21 M3,13.500 V39.500 H11.500" fill="none" stroke="#7d7d7d" stroke-width="1.300" stroke-linejoin="round"/><polygon points="11.500,14 23,3 23,29 11.500,40.500" fill="#4fbe73"/><polygon points="28,14 39,3.500 39,29 28,40.500" fill="#e8935a"/></svg>
<svg class="abs" style="left:1119px;top:111px" width="42" height="24" viewBox="0 0 42 24"><path d="M2.500,1.500 V11 M37.500,1.500 V11 M4,6.200 H36" stroke="#555" stroke-width="1.100"/><path d="M3.500,6.200 l5,-2.600 v5.200 z M36.500,6.200 l-5,-2.600 v5.200 z" fill="#555"/><rect x="2" y="13" width="36" height="8" fill="#f8a400"/><path d="M3.5,13.200 v3.2" stroke="#b87400" stroke-width="1"/><path d="M6.9,13.200 v2" stroke="#b87400" stroke-width="1"/><path d="M10.3,13.200 v3.2" stroke="#b87400" stroke-width="1"/><path d="M13.7,13.200 v2" stroke="#b87400" stroke-width="1"/><path d="M17.1,13.200 v3.2" stroke="#b87400" stroke-width="1"/><path d="M20.5,13.200 v2" stroke="#b87400" stroke-width="1"/><path d="M23.9,13.200 v3.2" stroke="#b87400" stroke-width="1"/><path d="M27.3,13.200 v2" stroke="#b87400" stroke-width="1"/><path d="M30.7,13.200 v3.2" stroke="#b87400" stroke-width="1"/><path d="M34.099999999999994,13.200 v2" stroke="#b87400" stroke-width="1"/><path d="M37.5,13.200 v3.2" stroke="#b87400" stroke-width="1"/></svg>
<svg class="abs" style="left:1202px;top:102px" width="44" height="42" viewBox="0 0 44 42"><polygon points="10.500,12 19,4 38.500,4 30,12" fill="#fbfbfb"/><polygon points="30,12 38.500,4 38.500,28.500 30,36.500" fill="#cfcfd6"/><rect x="10.500" y="12" width="19.500" height="24.500" fill="#ebebee"/><path d="M10.500,12 L19,4 H38.500 V28.500 L30,36.500 H10.500 Z M10.500,12 H30 V36.500 M30,12 L38.500,4" fill="none" stroke="#666" stroke-width="1.300" stroke-linejoin="round"/><path d="M2,30.500 Q5,21.500 14,21.500 V16.500 L24,24.500 L14,32 V27.500 Q7,27 2,30.500 Z" fill="#3a3d42" stroke="#fff" stroke-width=".8"/></svg>
<svg class="abs" style="left:1257px;top:104px" width="37" height="36" viewBox="0 0 37 36"><rect x=".500" y=".500" width="36" height="35" fill="#82c9fa" stroke="#5ba9e3" stroke-width="1"/><path d="M1,22 Q8,11 13,15.500 Q18,20 23,27 Q28,20 32,23.500 L36,28 V35 H1 Z" fill="#3c8fcb"/><circle cx="26.500" cy="10" r="3.800" fill="#ffffc2"/></svg>
<svg class="abs" style="left:1334px;top:101px" width="46" height="46" viewBox="0 0 46 46"><rect x="2.800" y="2.800" width="34" height="26" fill="none" stroke="#22b14c" stroke-width="1.400" stroke-dasharray="4 2.400"/><path d="M29,20.500 L29,37.500 L33,34 L35.700,41 L38.700,39.800 L36,33 L41,33 Z" fill="#fff" stroke="#444" stroke-width="1.300" stroke-linejoin="round"/></svg>
<!-- p_browser -->
<div class="panelhdr" style="left:5px;top:180px;width:375px;height:30.7px"></div>
<svg class="abs" style="left:10px;top:190px" width="16" height="12" viewBox="0 0 16 12"><path d="M7.500,1.500 V10 L1.500,5.800 Z M14,1.500 V10 L8,5.800 Z" fill="#333"/></svg>
<div class="t" style="left:36.30px;top:189.05px;font-size:13px;color:#666;transform:scaleX(0.9676);transform-origin:0 50%;">BROWSER</div>
<svg class="abs" style="left:352px;top:188.5px" width="14" height="14" viewBox="0 0 14 14"><circle cx="7" cy="7" r="5.600" fill="#222"/><rect x="3.500" y="6" width="7" height="2" fill="#f1f1f1"/></svg>
<div class="abs" style="left:373.500px;top:188px;width:1.500px;height:15px;background:#777"></div><div class="abs" style="left:376.500px;top:190px;width:1px;height:11px;background:#aaa"></div>
<div class="row" style="left:50px;top:218px;width:271px;height:24.500px;background:#efefef"></div>
<svg class="abs" style="left:25.5px;top:222px" width="15" height="15" viewBox="0 0 15 15"><defs><linearGradient id="to230" x1="0" y1="0" x2="1" y2="1"><stop offset="0" stop-color="#fff"/><stop offset="1" stop-color="#555"/></linearGradient></defs><path d="M13.500,1 V14 H1 Z" fill="url(#to230)" stroke="#333" stroke-width="1.200" stroke-linejoin="round"/></svg>
<svg class="abs" style="left:53.5px;top:223px" width="21" height="14" viewBox="0 0 21 14"><path d="M.5,7 Q10.500,-3 20.500,7 Q10.500,17 .5,7 Z" fill="#9b9b9b"/><circle cx="10.500" cy="7" r="4" fill="#eee"/><circle cx="10.500" cy="7" r="2.100" fill="#9b9b9b"/></svg>
<div class="abs" style="left:81px;top:220px;width:182.500px;height:20px;background:#989898"></div>
<svg class="abs" style="left:84px;top:219px" width="22" height="22" viewBox="0 0 22 22"><polygon points="2,6.500 6.500,2 19.500,2 15,6.500" fill="#fff"/><polygon points="15,6.500 19.500,2 19.500,15.500 15,20" fill="#c9cdd6"/><rect x="2" y="6.500" width="13" height="13.500" fill="#eceef2"/><path d="M2,6.500 L6.500,2 H19.500 V15.500 L15,20 H2 Z M2,6.500 H15 V20 M15,6.500 L19.500,2" fill="none" stroke="#444" stroke-width="1.100" stroke-linejoin="round"/></svg>
<div class="t" style="left:122.00px;top:223.65px;font-size:13px;color:#fff;font-weight:bold;transform:scaleX(1.0702);transform-origin:0 50%;">60&quot; Fusion Stick v4</div>
<svg class="abs" style="left:266px;top:220px" width="22" height="22" viewBox="0 0 22 22"><circle cx="10.500" cy="10" r="9" fill="#18a9bf"/><text x="10.500" y="14.600" text-anchor="middle" font-family="Liberation Sans,Arial,sans-serif" font-size="13" font-weight="bold" fill="#fff">C</text><circle cx="17" cy="16" r="3" fill="#fff" stroke="#555" stroke-width="1"/></svg>
<svg class="abs" style="left:293px;top:220px" width="22" height="22" viewBox="0 0 22 22"><circle cx="10" cy="10.500" r="8" fill="#f6f6f6" stroke="#222" stroke-width="1.400"/><circle cx="10" cy="10.500" r="3.200" fill="#222"/></svg>
<div class="row" style="left:72.5px;top:247.5px;width:167.5px"></div>
<svg class="abs" style="left:50.5px;top:251px" width="12" height="18" viewBox="0 0 12 18"><path d="M1,1 L11,9 L1,17 Z" fill="#f4f4f4" stroke="#333" stroke-width="1.400" stroke-linejoin="round"/></svg>
<svg class="abs" style="left:76.0px;top:249.5px" width="21" height="21" viewBox="0 0 21 21"><rect x="8.300" y="0" width="4.400" height="21" rx=".8" transform="rotate(0 10.500 10.500)" fill="#9a9a9a"/><rect x="8.300" y="0" width="4.400" height="21" rx=".8" transform="rotate(45 10.500 10.500)" fill="#9a9a9a"/><rect x="8.300" y="0" width="4.400" height="21" rx=".8" transform="rotate(90 10.500 10.500)" fill="#9a9a9a"/><rect x="8.300" y="0" width="4.400" height="21" rx=".8" transform="rotate(135 10.500 10.500)" fill="#9a9a9a"/><rect x="8.300" y="0" width="4.400" height="21" rx=".8" transform="rotate(180 10.500 10.500)" fill="#9a9a9a"/><rect x="8.300" y="0" width="4.400" height="21" rx=".8" transform="rotate(225 10.500 10.500)" fill="#9a9a9a"/><rect x="8.300" y="0" width="4.400" height="21" rx=".8" transform="rotate(270 10.500 10.500)" fill="#9a9a9a"/><rect x="8.300" y="0" width="4.400" height="21" rx=".8" transform="rotate(315 10.500 10.500)" fill="#9a9a9a"/><circle cx="10.500" cy="10.500" r="7.600" fill="#9a9a9a"/><circle cx="10.500" cy="10.500" r="3.600" fill="#eee"/></svg>
<div class="t" style="left:113.50px;top:253.65px;font-size:13px;color:#333;transform:scaleX(1.0242);transform-origin:0 50%;">Document Settings</div>
<div class="row" style="left:72.5px;top:277.5px;width:137.5px"></div>
<svg class="abs" style="left:50.5px;top:281px" width="12" height="18" viewBox="0 0 12 18"><path d="M1,1 L11,9 L1,17 Z" fill="#f4f4f4" stroke="#333" stroke-width="1.400" stroke-linejoin="round"/></svg>
<svg class="abs" style="left:75.5px;top:281px" width="21" height="18" viewBox="0 0 21 18"><path d="M.5,2.500 H8.500 V4.500 H.5 Z" fill="#8f8f8f"/><path d="M.5,5.500 H10 L11.500,2.500 H20.500 V17.500 H.5 Z" fill="#8f8f8f"/></svg>
<div class="t" style="left:113.50px;top:283.65px;font-size:13px;color:#333;transform:scaleX(1.0604);transform-origin:0 50%;">Named Views</div>
<div class="row" style="left:72.5px;top:307.5px;width:118.5px"></div>
<svg class="abs" style="left:50.5px;top:311px" width="12" height="18" viewBox="0 0 12 18"><path d="M1,1 L11,9 L1,17 Z" fill="#f4f4f4" stroke="#333" stroke-width="1.400" stroke-linejoin="round"/></svg>
<svg class="abs" style="left:76.0px;top:313px" width="21" height="14" viewBox="0 0 21 14"><path d="M1,7 Q10.500,-2 20,7 Q10.500,16 1,7 Z" fill="none" stroke="#a9a9a9" stroke-width="1.100"/><circle cx="10.500" cy="7" r="3.300" fill="none" stroke="#a9a9a9" stroke-width="1.100"/><path d="M4.500,.5 L17,13.500" stroke="#a9a9a9" stroke-width="1.100"/></svg>
<svg class="abs" style="left:106.5px;top:311px" width="21" height="18" viewBox="0 0 21 18"><path d="M.5,2.500 H8.500 V4.500 H.5 Z" fill="#8f8f8f"/><path d="M.5,5.500 H10 L11.500,2.500 H20.500 V17.500 H.5 Z" fill="#8f8f8f"/></svg>
<div class="t" style="left:145.00px;top:313.65px;font-size:13px;color:#333;">Origin</div>
<div class="row" style="left:72.5px;top:337.5px;width:128.5px"></div>
<svg class="abs" style="left:48px;top:343px" width="15" height="15" viewBox="0 0 15 15"><defs><linearGradient id="to351" x1="0" y1="0" x2="1" y2="1"><stop offset="0" stop-color="#fff"/><stop offset="1" stop-color="#555"/></linearGradient></defs><path d="M13.500,1 V14 H1 Z" fill="url(#to351)" stroke="#333" stroke-width="1.200" stroke-linejoin="round"/></svg>
<svg class="abs" style="left:76.0px;top:343px" width="21" height="14" viewBox="0 0 21 14"><path d="M.5,7 Q10.500,-3 20.500,7 Q10.500,17 .5,7 Z" fill="#9b9b9b"/><circle cx="10.500" cy="7" r="4" fill="#eee"/><circle cx="10.500" cy="7" r="2.100" fill="#9b9b9b"/></svg>
<svg class="abs" style="left:106.5px;top:341px" width="21" height="18" viewBox="0 0 21 18"><path d="M.5,2.500 H8.500 V4.500 H.5 Z" fill="#8f8f8f"/><path d="M.5,5.500 H10 L11.500,2.500 H20.500 V17.500 H.5 Z" fill="#8f8f8f"/></svg>
<div class="t" style="left:145.00px;top:343.65px;font-size:13px;color:#333;transform:scaleX(1.0238);transform-origin:0 50%;">Bodies</div>
<div class="row" style="left:95px;top:367.5px;width:148.5px"></div>
<svg class="abs" style="left:98.5px;top:373px" width="21" height="14" viewBox="0 0 21 14"><path d="M.5,7 Q10.500,-3 20.500,7 Q10.500,17 .5,7 Z" fill="#9b9b9b"/><circle cx="10.500" cy="7" r="4" fill="#eee"/><circle cx="10.500" cy="7" r="2.100" fill="#9b9b9b"/></svg>
<svg class="abs" style="left:129.5px;top:370px" width="21" height="20" viewBox="0 0 21 20"><defs><linearGradient id="bi380" x1="0" y1="0" x2="1" y2="0"><stop offset="0" stop-color="#ffffff"/><stop offset=".25" stop-color="#d8dbe1"/><stop offset=".6" stop-color="#c3c7d0"/><stop offset="1" stop-color="#eceef1"/></linearGradient><linearGradient id="bj380" x1="0" y1="0" x2="0" y2="1"><stop offset="0" stop-color="#fff" stop-opacity=".9"/><stop offset=".3" stop-color="#fff" stop-opacity="0"/></linearGradient></defs><rect x="1" y=".8" width="19" height="18.700" rx="5.200" ry="4.600" fill="#fdfdfd"/><path d="M5.500,8 H19 V15 Q19,18.500 15,18.700 H9.500 Q5.500,18.500 5.500,15 Z" fill="url(#bi380)"/><path d="M5.500,8 H19 V15 H5.500 Z" fill="url(#bj380)"/><rect x="1" y=".8" width="19" height="18.700" rx="5.200" ry="4.600" fill="none" stroke="#3a4352" stroke-width="1.500"/></svg>
<div class="t" style="left:167.50px;top:373.65px;font-size:13px;color:#333;transform:scaleX(1.0175);transform-origin:0 50%;">Fuse Solid</div>
<div class="row" style="left:95px;top:397.5px;width:173.5px"></div>
<svg class="abs" style="left:98.5px;top:403px" width="21" height="14" viewBox="0 0 21 14"><path d="M1,7 Q10.500,-2 20,7 Q10.500,16 1,7 Z" fill="none" stroke="#a9a9a9" stroke-width="1.100"/><circle cx="10.500" cy="7" r="3.300" fill="none" stroke="#a9a9a9" stroke-width="1.100"/><path d="M4.500,.5 L17,13.500" stroke="#a9a9a9" stroke-width="1.100"/></svg>
<svg class="abs" style="left:129.5px;top:400px" width="21" height="20" viewBox="0 0 21 20"><defs><linearGradient id="bi410" x1="0" y1="0" x2="1" y2="0"><stop offset="0" stop-color="#ffffff"/><stop offset=".25" stop-color="#d8dbe1"/><stop offset=".6" stop-color="#c3c7d0"/><stop offset="1" stop-color="#eceef1"/></linearGradient><linearGradient id="bj410" x1="0" y1="0" x2="0" y2="1"><stop offset="0" stop-color="#fff" stop-opacity=".9"/><stop offset=".3" stop-color="#fff" stop-opacity="0"/></linearGradient></defs><rect x="1" y=".8" width="19" height="18.700" rx="5.200" ry="4.600" fill="#fdfdfd"/><path d="M5.500,8 H19 V15 Q19,18.500 15,18.700 H9.500 Q5.500,18.500 5.500,15 Z" fill="url(#bi410)"/><path d="M5.500,8 H19 V15 H5.500 Z" fill="url(#bj410)"/><rect x="1" y=".8" width="19" height="18.700" rx="5.200" ry="4.600" fill="none" stroke="#3a4352" stroke-width="1.500"/></svg>
<div class="t" style="left:167.50px;top:403.65px;font-size:13px;color:#333;transform:scaleX(1.0305);transform-origin:0 50%;">Left Wing Solid</div>
<div class="row" style="left:95px;top:427.5px;width:183.5px"></div>
<svg class="abs" style="left:98.5px;top:433px" width="21" height="14" viewBox="0 0 21 14"><path d="M1,7 Q10.500,-2 20,7 Q10.500,16 1,7 Z" fill="none" stroke="#a9a9a9" stroke-width="1.100"/><circle cx="10.500" cy="7" r="3.300" fill="none" stroke="#a9a9a9" stroke-width="1.100"/><path d="M4.500,.5 L17,13.500" stroke="#a9a9a9" stroke-width="1.100"/></svg>
<svg class="abs" style="left:129.5px;top:430px" width="21" height="20" viewBox="0 0 21 20"><defs><linearGradient id="bi440" x1="0" y1="0" x2="1" y2="0"><stop offset="0" stop-color="#ffffff"/><stop offset=".25" stop-color="#d8dbe1"/><stop offset=".6" stop-color="#c3c7d0"/><stop offset="1" stop-color="#eceef1"/></linearGradient><linearGradient id="bj440" x1="0" y1="0" x2="0" y2="1"><stop offset="0" stop-color="#fff" stop-opacity=".9"/><stop offset=".3" stop-color="#fff" stop-opacity="0"/></linearGradient></defs><rect x="1" y=".8" width="19" height="18.700" rx="5.200" ry="4.600" fill="#fdfdfd"/><path d="M5.500,8 H19 V15 Q19,18.500 15,18.700 H9.500 Q5.500,18.500 5.500,15 Z" fill="url(#bi440)"/><path d="M5.500,8 H19 V15 H5.500 Z" fill="url(#bj440)"/><rect x="1" y=".8" width="19" height="18.700" rx="5.200" ry="4.600" fill="none" stroke="#3a4352" stroke-width="1.500"/></svg>
<div class="t" style="left:167.50px;top:433.65px;font-size:13px;color:#333;">Right Wing Solid</div>
<div class="row" style="left:95px;top:457.5px;width:133.5px"></div>
<svg class="abs" style="left:98.5px;top:463px" width="21" height="14" viewBox="0 0 21 14"><path d="M1,7 Q10.500,-2 20,7 Q10.500,16 1,7 Z" fill="none" stroke="#a9a9a9" stroke-width="1.100"/><circle cx="10.500" cy="7" r="3.300" fill="none" stroke="#a9a9a9" stroke-width="1.100"/><path d="M4.500,.5 L17,13.500" stroke="#a9a9a9" stroke-width="1.100"/></svg>
<svg class="abs" style="left:129.5px;top:460px" width="21" height="20" viewBox="0 0 21 20"><defs><linearGradient id="bi470" x1="0" y1="0" x2="1" y2="0"><stop offset="0" stop-color="#ffffff"/><stop offset=".25" stop-color="#d8dbe1"/><stop offset=".6" stop-color="#c3c7d0"/><stop offset="1" stop-color="#eceef1"/></linearGradient><linearGradient id="bj470" x1="0" y1="0" x2="0" y2="1"><stop offset="0" stop-color="#fff" stop-opacity=".9"/><stop offset=".3" stop-color="#fff" stop-opacity="0"/></linearGradient></defs><rect x="1" y=".8" width="19" height="18.700" rx="5.200" ry="4.600" fill="#fdfdfd"/><path d="M5.500,8 H19 V15 Q19,18.500 15,18.700 H9.500 Q5.500,18.500 5.500,15 Z" fill="url(#bi470)"/><path d="M5.500,8 H19 V15 H5.500 Z" fill="url(#bj470)"/><rect x="1" y=".8" width="19" height="18.700" rx="5.200" ry="4.600" fill="none" stroke="#3a4352" stroke-width="1.500"/></svg>
<div class="t" style="left:167.50px;top:463.65px;font-size:13px;color:#333;transform:scaleX(1.0719);transform-origin:0 50%;">Vertical</div>
<div class="row" style="left:95px;top:487.5px;width:128.5px"></div>
<svg class="abs" style="left:98.5px;top:493px" width="21" height="14" viewBox="0 0 21 14"><path d="M1,7 Q10.500,-2 20,7 Q10.500,16 1,7 Z" fill="none" stroke="#a9a9a9" stroke-width="1.100"/><circle cx="10.500" cy="7" r="3.300" fill="none" stroke="#a9a9a9" stroke-width="1.100"/><path d="M4.500,.5 L17,13.500" stroke="#a9a9a9" stroke-width="1.100"/></svg>
<svg class="abs" style="left:129.5px;top:490px" width="21" height="20" viewBox="0 0 21 20"><defs><linearGradient id="bi500" x1="0" y1="0" x2="1" y2="0"><stop offset="0" stop-color="#ffffff"/><stop offset=".25" stop-color="#d8dbe1"/><stop offset=".6" stop-color="#c3c7d0"/><stop offset="1" stop-color="#eceef1"/></linearGradient><linearGradient id="bj500" x1="0" y1="0" x2="0" y2="1"><stop offset="0" stop-color="#fff" stop-opacity=".9"/><stop offset=".3" stop-color="#fff" stop-opacity="0"/></linearGradient></defs><rect x="1" y=".8" width="19" height="18.700" rx="5.200" ry="4.600" fill="#fdfdfd"/><path d="M5.500,8 H19 V15 Q19,18.500 15,18.700 H9.500 Q5.500,18.500 5.500,15 Z" fill="url(#bi500)"/><path d="M5.500,8 H19 V15 H5.500 Z" fill="url(#bj500)"/><rect x="1" y=".8" width="19" height="18.700" rx="5.200" ry="4.600" fill="none" stroke="#3a4352" stroke-width="1.500"/></svg>
<div class="t" style="left:167.50px;top:493.65px;font-size:13px;color:#333;transform:scaleX(1.0202);transform-origin:0 50%;">Rudder</div>
<div class="row" style="left:72.5px;top:517.5px;width:148.5px"></div>
<svg class="abs" style="left:50.5px;top:521px" width="12" height="18" viewBox="0 0 12 18"><path d="M1,1 L11,9 L1,17 Z" fill="#f4f4f4" stroke="#333" stroke-width="1.400" stroke-linejoin="round"/></svg>
<svg class="abs" style="left:76.0px;top:523px" width="21" height="14" viewBox="0 0 21 14"><path d="M1,7 Q10.500,-2 20,7 Q10.500,16 1,7 Z" fill="none" stroke="#a9a9a9" stroke-width="1.100"/><circle cx="10.500" cy="7" r="3.300" fill="none" stroke="#a9a9a9" stroke-width="1.100"/><path d="M4.500,.5 L17,13.500" stroke="#a9a9a9" stroke-width="1.100"/></svg>
<svg class="abs" style="left:106.5px;top:521px" width="21" height="18" viewBox="0 0 21 18"><path d="M.5,2.500 H8.500 V4.500 H.5 Z" fill="#8f8f8f"/><path d="M.5,5.500 H10 L11.500,2.500 H20.500 V17.500 H.5 Z" fill="#8f8f8f"/></svg>
<div class="t" style="left:145.00px;top:523.65px;font-size:13px;color:#333;transform:scaleX(1.0586);transform-origin:0 50%;">Canvases</div>
<div class="row" style="left:72.5px;top:547.5px;width:143.5px"></div>
<svg class="abs" style="left:50.5px;top:551px" width="12" height="18" viewBox="0 0 12 18"><path d="M1,1 L11,9 L1,17 Z" fill="#f4f4f4" stroke="#333" stroke-width="1.400" stroke-linejoin="round"/></svg>
<svg class="abs" style="left:76.0px;top:553px" width="21" height="14" viewBox="0 0 21 14"><path d="M.5,7 Q10.500,-3 20.500,7 Q10.500,17 .5,7 Z" fill="#9b9b9b"/><circle cx="10.500" cy="7" r="4" fill="#eee"/><circle cx="10.500" cy="7" r="2.100" fill="#9b9b9b"/></svg>
<svg class="abs" style="left:106.5px;top:551px" width="21" height="18" viewBox="0 0 21 18"><path d="M.5,2.500 H8.500 V4.500 H.5 Z" fill="#8f8f8f"/><path d="M.5,5.500 H10 L11.500,2.500 H20.500 V17.500 H.5 Z" fill="#8f8f8f"/></svg>
<div class="t" style="left:145.00px;top:553.65px;font-size:13px;color:#333;transform:scaleX(1.0397);transform-origin:0 50%;">Sketches</div>
<div class="abs" style="left:104px;top:565.3px;width:110px;height:4px;transform:skewX(-42deg);background:repeating-linear-gradient(90deg,#7090c2 0 2.6px,transparent 2.6px 7px)"></div>
<!-- p_dialog -->
<svg class="abs" style="left:1815px;top:190px" width="105" height="110" viewBox="0 0 105 110"><defs><linearGradient id="vc1" x1="0" y1="0" x2="0" y2="1"><stop offset="0" stop-color="#efefef"/><stop offset="1" stop-color="#dcdcdc"/></linearGradient><radialGradient id="vcs" cx=".5" cy=".5" r=".5"><stop offset="0" stop-color="#000" stop-opacity=".22"/><stop offset="1" stop-color="#000" stop-opacity="0"/></radialGradient></defs><ellipse cx="42" cy="97" rx="42" ry="9" fill="url(#vcs)"/><polygon points="8,29 21,33 24.500,93.500 8,84" fill="#dedede"/><polygon points="8,29 56,27.500 70.500,29.500 21.500,33" fill="#f1f1f1"/><polygon points="21.500,33 70.500,29.500 70.500,83 24.500,93.500" fill="url(#vc1)"/><path d="M21.500,33 L70.500,29.500 L70.500,83 L24.500,93.500 Z M8,29 L21.500,33 M8,29 L56,27.500 L70.500,29.500" fill="none" stroke="#a8a8a8" stroke-width=".9" stroke-dasharray="5 2.5"/><polygon points="17.500,45 31,43.500 33,80 19,82" fill="#d4d6dc" fill-opacity=".65"/><text transform="translate(35.5,69) rotate(-11.5) scale(.62,1)" font-family="Liberation Sans,Arial,sans-serif" font-size="15.5" fill="#a9acb6">BACK</text><text transform="translate(8,66) rotate(14) scale(.6,1)" font-family="Liberation Sans,Arial,sans-serif" font-size="11" fill="#b0b0b4">GHT</text><text transform="translate(36.3,19) scale(.82,1)" font-family="Liberation Sans,Arial,sans-serif" font-size="18" fill="#8a8af4" stroke="#8a8af4" stroke-width=".5">Z</text><path d="M40.500,21 V27.500" stroke="#7878f0" stroke-width="2.200"/><path d="M68,83 L78,86" stroke="#90ee90" stroke-width="2"/><text transform="translate(78.8,93.3) scale(.8,1)" font-family="Liberation Sans,Arial,sans-serif" font-size="16.5" fill="#90ee90" stroke="#90ee90" stroke-width=".4">Y</text></svg>
<div class="abs" id="dlg">
<div class="abs" style="left:0;top:28.7px;width:311px;height:1px;background:#d0d0d0"></div>
<svg class="abs" style="left:6px;top:8px" width="14" height="14" viewBox="0 0 14 14"><circle cx="7" cy="7" r="5.700" fill="#222"/><rect x="3.500" y="6" width="7" height="2" fill="#f2f2f2"/></svg>
<div class="t" style="left:30.20px;top:7.95px;font-size:13px;color:#666;transform:scaleX(0.9240);transform-origin:0 50%;">EXTRUDE</div>
<div class="t" style="left:15.20px;top:43.00px;font-size:13.3px;color:#333;">Type</div>
<div class="t" style="left:15.20px;top:80.50px;font-size:13.3px;color:#333;transform:scaleX(1.0102);transform-origin:0 50%;">Profiles</div>
<div class="t" style="left:15.20px;top:118.00px;font-size:13.3px;color:#333;transform:scaleX(1.0253);transform-origin:0 50%;">Start</div>
<div class="t" style="left:15.20px;top:155.50px;font-size:13.3px;color:#333;transform:scaleX(0.9909);transform-origin:0 50%;">Direction</div>
<div class="t" style="left:15.20px;top:193.00px;font-size:13.3px;color:#333;">Extent Type</div>
<div class="t" style="left:15.20px;top:230.50px;font-size:13.3px;color:#333;transform:scaleX(1.0146);transform-origin:0 50%;">Distance</div>
<div class="t" style="left:15.20px;top:268.00px;font-size:13.3px;color:#333;transform:scaleX(1.0107);transform-origin:0 50%;">Taper Angle</div>
<div class="t" style="left:15.20px;top:318.00px;font-size:13.3px;color:#333;transform:scaleX(0.9930);transform-origin:0 50%;">Operation</div>
<div class="abs" style="left:105.8px;top:32px;width:29px;height:33.8px;background:#0696d7;border-radius:1.500px"></div>
<svg class="abs" style="left:109.3px;top:38px" width="24" height="24" viewBox="0 0 24 24"><polygon points="1.500,5 5,1.500 14.500,1.500 11.500,5" fill="#c3e5fc"/><polygon points="11.500,5 14.500,1.500 14.500,14.500 11.500,18" fill="#6db0e4"/><rect x="1.500" y="5" width="10" height="13" fill="#8ecbf8"/><polygon points="1.500,18 11.500,18 14.500,14.500 14.500,17 11.500,20.500 1.500,20.500" fill="#dcdcdc"/><path d="M18.500,16.500 V4" stroke="#fff" stroke-width="1.300"/><path d="M16.700,5.500 L18.500,2 L20.300,5.500 Z" fill="#fff"/></svg>
<svg class="abs" style="left:146px;top:38px" width="26" height="24" viewBox="0 0 26 24"><path d="M1,19.500 H4.800 V17.300 H9.600 V19.300 H12 L15.800,16.200" stroke="#cdcdcd" stroke-width="1.700" fill="none"/><polygon points="1,4 4.500,1.300 15.800,1.300 12.300,4" fill="#8ecbf8"/><path d="M1,4 H12.300 V17.300 H9.800 V14.800 Q7.300,13.300 4.600,14.800 V17.800 H1 Z" fill="#5aa5df"/><path d="M4.600,4 H9.800 V14.800 Q7.300,13.300 4.600,14.800 Z" fill="#4a97d6"/><polygon points="12.300,4 15.800,1.300 15.800,14.200 12.300,17.300" fill="#3f8fcf"/><path d="M18.800,17 V4" stroke="#444" stroke-width="1.400"/><path d="M16.900,5.800 L18.800,2 L20.700,5.800 Z" fill="#444"/></svg>
<div class="abs" style="left:105.8px;top:69.6px;width:97.5px;height:33.8px;background:#0696d7;border-radius:1.500px"></div>
<svg class="abs" style="left:113px;top:76px" width="16" height="22" viewBox="0 0 16 22"><path d="M2.500,1.500 V16 L6,13 L8.600,19.500 L11.200,18.400 L8.600,12 H13 Z" fill="#e8e8e8" stroke="#444" stroke-width="1.100" stroke-linejoin="round"/></svg>
<div class="t" style="left:134.00px;top:80.50px;font-size:13.3px;color:#fff;transform:scaleX(1.0143);transform-origin:0 50%;">1 selected</div>
<svg class="abs" style="left:216px;top:80px" width="14" height="14" viewBox="0 0 14 14"><path d="M2,2 L12,12 M12,2 L2,12" stroke="#444" stroke-width="2"/></svg>
<div class="ddbox" style="top:107.6px"><svg class="abs" style="left:4px;top:6px" width="22" height="20" viewBox="0 0 22 20"><path d="M4.500,1 V19" stroke="#1f3a6e" stroke-width="2.200"/><path d="M5,10 H14" stroke="#222" stroke-width="1.400"/><path d="M12,6.500 L16.500,10 L12,13.500 Z" fill="#222"/></svg><div class="dd" style="left:149px;top:14px;border-top-color:#222"></div></div>
<div class="t" style="left:135.80px;top:118.00px;font-size:13.3px;color:#333;transform:scaleX(0.9707);transform-origin:0 50%;">Profile Plane</div>
<div class="ddbox" style="top:145.1px"><svg class="abs" style="left:2px;top:4px" width="24" height="24" viewBox="0 0 24 24"><path d="M3.500,20.500 L13,11" stroke="#444" stroke-width="1.400"/><path d="M2,22 L3.500,16.500 L7.500,20.500 Z" fill="#444"/><path d="M9,5.500 L19.500,8 V17 L12.500,11.500 Z" fill="#f0a878" stroke="#d88850" stroke-width=".8"/><path d="M9,5.500 L12.500,11.500" stroke="#b06a3a" stroke-width="1"/></svg><div class="dd" style="left:149px;top:14px;border-top-color:#222"></div></div>
<div class="t" style="left:135.80px;top:155.50px;font-size:13.3px;color:#333;transform:scaleX(0.9846);transform-origin:0 50%;">One Side</div>
<div class="ddbox" style="top:182.6px"><svg class="abs" style="left:2px;top:6px" width="24" height="20" viewBox="0 0 24 20"><path d="M2.500,1 V19 M21.500,1 V19" stroke="#1f3a6e" stroke-width="2"/><path d="M5,10 H19" stroke="#222" stroke-width="1.300"/><path d="M8,7 L4,10 L8,13 Z M16,7 L20,10 L16,13 Z" fill="#222"/></svg><div class="dd" style="left:149px;top:14px;border-top-color:#222"></div></div>
<div class="t" style="left:135.80px;top:193.00px;font-size:13.3px;color:#333;transform:scaleX(1.0049);transform-origin:0 50%;">Distance</div>
<div class="ddbox" style="top:307.6px"><svg class="abs" style="left:3px;top:6px" width="22" height="20" viewBox="0 0 22 20"><rect x="7" y="1.500" width="8" height="11" fill="#f2a9b0"/><path d="M2,8.500 H6.500 V13.500 H15.500 V8.500 H20 V19 H2 Z" fill="#4a98dc"/></svg><div class="dd" style="left:149px;top:14px;border-top-color:#222"></div></div>
<div class="t" style="left:135.80px;top:318.00px;font-size:13.3px;color:#333;transform:scaleX(0.9470);transform-origin:0 50%;">Cut</div>
<div class="inbox" style="top:220.8px"></div>
<div class="t" style="left:110.40px;top:230.50px;font-size:13.3px;color:#333;transform:scaleX(1.0908);transform-origin:0 50%;">-6</div>
<div class="inbox" style="top:258.4px"></div>
<div class="t" style="left:110.40px;top:268.10px;font-size:13.3px;color:#333;">0.0 deg</div>
<div class="abs" style="left:2.500px;top:300px;width:292px;height:1px;background:#cfcfcf"></div>
<svg class="abs" style="left:9px;top:356px" width="10" height="12" viewBox="0 0 10 12"><path d="M1.500,1 L8.500,6 L1.500,11 Z" fill="#222"/></svg>
<div class="t" style="left:30.10px;top:354.91px;font-size:13.5px;color:#333;font-weight:bold;transform:scaleX(1.0590);transform-origin:0 50%;">Objects To Cut</div>
<div class="abs" style="left:0;top:382px;width:311px;height:1px;background:#d0d0d0"></div>
<svg class="abs" style="left:10.2px;top:397.8px" width="15" height="15" viewBox="0 0 15 15"><circle cx="7.500" cy="7.500" r="6.700" fill="#111"/><circle cx="7.500" cy="4.300" r="1.200" fill="#fff"/><path d="M5.800,6.300 H8.500 V10.500 H9.500 V11.700 H5.700 V10.500 H6.800 V7.500 H5.800 Z" fill="#fff"/></svg>
<div class="btn" style="left:134.4px;width:74.6px"></div>
<div class="btn" style="left:222.1px;width:74.8px"></div>
<div class="t" style="left:161.10px;top:397.43px;font-size:15.5px;color:#555;transform:scaleX(0.9288);transform-origin:0 50%;">OK</div>
<div class="t" style="left:235.00px;top:397.43px;font-size:15.5px;color:#555;transform:scaleX(0.9907);transform-origin:0 50%;">Cancel</div>
</div>
<!-- p_bottom -->
<div class="panelhdr" style="left:5px;top:931px;width:375px;height:30.500px"></div>
<div class="t" style="left:36.50px;top:939.95px;font-size:13px;color:#666;transform:scaleX(0.9336);transform-origin:0 50%;">COMMENTS</div>
<svg class="abs" style="left:352px;top:939.5px" width="14" height="14" viewBox="0 0 14 14"><circle cx="7" cy="7" r="5.600" fill="#222"/><path d="M3.800,7 H10.200 M7,3.800 V10.200" stroke="#f1f1f1" stroke-width="1.700"/></svg>
<div class="abs" style="left:373.500px;top:938.500px;width:1.500px;height:15px;background:#777"></div><div class="abs" style="left:376.500px;top:940.500px;width:1px;height:11px;background:#aaa"></div>
<div class="abs" style="left:811px;top:933px;width:296px;height:29.500px;background:#f1f1f1"></div>
<svg class="abs" style="left:811px;top:933px" width="296" height="30" viewBox="0 0 296 30"><ellipse cx="14" cy="14.500" rx="4" ry="9.500" fill="none" stroke="#555" stroke-width="1.200"/><path d="M5,11 Q2,15 9,17.500 Q18,19.500 23,15.500 Q24.500,13 21,11.500" fill="none" stroke="#555" stroke-width="1.200"/><path d="M19.500,9.500 l2.500,2 l-3,1.500" fill="none" stroke="#555" stroke-width="1.200"/><path d="M14,11 l1,2.500 l2.500,1 l-2.500,1 l-1,2.500 l-1,-2.500 l-2.500,-1 l2.500,-1 z" fill="#1a8fe6"/><path d="M18,6 v4 M16,8 h4" stroke="#555" stroke-width="1"/><path d="M46,12 L52,5.500 L54,8 L59,5 L63,7.500 V12" fill="#cfcfcf" stroke="#555" stroke-width="1.100" stroke-linejoin="round"/><rect x="45.500" y="12" width="18.500" height="13" fill="#f8f8f8" stroke="#555" stroke-width="1.300"/><rect x="49.500" y="16" width="10.500" height="5.500" fill="#a9b4c4" stroke="#555" stroke-width="1.100"/><path d="M82,17 L79,13.500 Q78,12 79.500,11.500 Q81,11.500 83,14 V7.500 Q83,6 84.300,6 Q85.500,6 85.500,7.500 V5.500 Q85.500,4 86.800,4 Q88,4 88,5.500 V6.500 Q88,5 89.300,5 Q90.500,5 90.500,6.500 V8.500 Q90.500,7.500 91.800,7.500 Q93,7.500 93,9 V17 Q93,22 90,24.500 H84.500 Q82.500,21 82,17 Z" fill="#fff" stroke="#444" stroke-width="1.100" stroke-linejoin="round"/><path d="M85.500,7.500 V13 M88,6.500 V13 M90.500,8.500 V13" stroke="#444" stroke-width=".9"/><circle cx="116.500" cy="13" r="6" fill="#d8e6ea" stroke="#666" stroke-width="1.500"/><path d="M121,17.500 L126.500,23" stroke="#444" stroke-width="3" stroke-linecap="round"/><path d="M129,3.500 V9 M126.500,6 H131.500 M126.500,11.500 H131.500" stroke="#444" stroke-width="1.100"/><rect x="143" y="5" width="19" height="19" fill="none" stroke="#555" stroke-width="1" stroke-dasharray="3 2"/><circle cx="151" cy="13" r="7.500" fill="#e0ecee" stroke="#666" stroke-width="1.500"/><path d="M156.500,19 L162,24.500" stroke="#444" stroke-width="3" stroke-linecap="round"/><rect x="184.500" y="5.500" width="18.500" height="14.500" rx="1" fill="#fdfdfd" stroke="#666" stroke-width="1.400"/><rect x="187" y="8" width="13.500" height="9.500" fill="#9db8de"/><path d="M191,20 h5.500 v2.500 h3 v1.800 h-11.500 v-1.800 h3 z" fill="#888"/><rect x="223" y="5" width="19" height="19" fill="#bbb"/><path d="M223.0,5 V24 M223,5.0 H242" stroke="#666" stroke-width="1"/><path d="M226.8,5 V24 M223,8.8 H242" stroke="#666" stroke-width="1"/><path d="M230.6,5 V24 M223,12.6 H242" stroke="#666" stroke-width="1"/><path d="M234.4,5 V24 M223,16.4 H242" stroke="#666" stroke-width="1"/><path d="M238.2,5 V24 M223,20.2 H242" stroke="#666" stroke-width="1"/><path d="M242.0,5 V24 M223,24.0 H242" stroke="#666" stroke-width="1"/><rect x="261" y="5.500" width="18.500" height="16.500" fill="#6f8fc8"/><rect x="262.500" y="7" width="7" height="6" fill="#a9c0e6"/><rect x="271" y="7" width="7" height="6" fill="#a9c0e6"/><rect x="262.500" y="14.500" width="7" height="6" fill="#a9c0e6"/><rect x="271" y="14.500" width="7" height="6" fill="#a9c0e6"/></svg>
<div class="dd" style="left:840.5px;top:945.5px;border-top-color:#222"></div>
<div class="dd" style="left:979px;top:945.5px;border-top-color:#222"></div>
<div class="dd" style="left:1016.5px;top:945.5px;border-top-color:#222"></div>
<div class="dd" style="left:1055.5px;top:945.5px;border-top-color:#222"></div>
<div class="dd" style="left:1094px;top:945.5px;border-top-color:#222"></div>
<div class="abs" id="timeline"></div>
<svg class="abs" style="left:0px;top:985px" width="170" height="28" viewBox="0 0 170 28"><path d="M14.500,5.500 V22 M29,5.500 V22 L17,13.800 Z" fill="#333" stroke="#333" stroke-width="1.300" stroke-linejoin="round"/><path d="M56,6.500 V21 L44.500,13.800 Z" fill="#333"/><rect x="57.500" y="10.500" width="2.600" height="6.500" fill="#333"/><path d="M77,3.500 V24 L91,13.800 Z" fill="#333"/><path d="M110,6.500 V21 L121.500,13.800 Z" fill="#333"/><rect x="106" y="10.500" width="2.600" height="6.500" fill="#333"/><path d="M153.500,5.500 V22 M139,5.500 V22 L151,13.800 Z" fill="#333" stroke="#333" stroke-width="1.300" stroke-linejoin="round"/></svg>
<div class="abs" style="left:192px;top:1017.500px;width:421px;height:2px;background:#c9c9c9"></div>
<div class="abs" style="left:191px;top:1011px;width:2px;height:7px;background:#c9c9c9"></div>
<svg class="abs" style="left:183.5px;top:988.8px" width="17" height="17" viewBox="0 0 17 17"><rect x=".5" y=".5" width="16" height="16" fill="#7cc4f8" stroke="#4e9fde" stroke-width="1"/><path d="M1,10.500 Q4,5.500 6.800,8.200 L10,12.200 Q12.600,8.800 14.400,10.500 L16,12 V16 H1 Z" fill="#3b8dcc"/><circle cx="11.800" cy="4.700" r="2" fill="#ffffc2"/></svg>
<div class="abs" style="left:221px;top:1011px;width:2px;height:7px;background:#c9c9c9"></div>
<svg class="abs" style="left:213.5px;top:988.8px" width="17" height="17" viewBox="0 0 17 17"><rect x=".5" y=".5" width="16" height="16" fill="#7cc4f8" stroke="#4e9fde" stroke-width="1"/><path d="M1,10.500 Q4,5.500 6.800,8.200 L10,12.200 Q12.600,8.800 14.400,10.500 L16,12 V16 H1 Z" fill="#3b8dcc"/><circle cx="11.800" cy="4.700" r="2" fill="#ffffc2"/></svg>
<div class="abs" style="left:251px;top:1011px;width:2px;height:7px;background:#c9c9c9"></div>
<svg class="abs" style="left:241.5px;top:987px" width="24" height="22" viewBox="0 0 24 22"><path d="M2.500,3 H18 V11 M2.500,3 V18.200 H11.500" fill="none" stroke="#333" stroke-width="1.100" stroke-dasharray="6.500 2.500"/><rect x="1.1" y="1.6" width="2.800" height="2.800" fill="#1a8fe6"/><rect x="16.6" y="1.6" width="2.800" height="2.800" fill="#1a8fe6"/><rect x="1.1" y="16.8" width="2.800" height="2.800" fill="#1a8fe6"/><path d="M11.300,19.800 L12.500,16.700 L18.300,11.500 L20.600,14 L14.700,19.200 Z" fill="#f4b942"/><path d="M18.300,11.500 L19.500,10.500 Q20.800,9.900 21.600,11.200 Q22,12.500 20.600,14 Z" fill="#f04646"/><path d="M11.300,19.800 L12.500,16.700 L14.700,19.200 Z" fill="#555"/></svg>
<div class="abs" style="left:281px;top:1011px;width:2px;height:7px;background:#c9c9c9"></div>
<svg class="abs" style="left:271px;top:986px" width="24" height="24" viewBox="0 0 24 24"><polygon points="2,6.500 5.500,3 16,3 12.500,6.500" fill="#8ecbf8"/><polygon points="12.500,6.500 16,3 16,16 12.500,19.500" fill="#3f8fcf"/><rect x="2" y="6.500" width="10.500" height="13" fill="#5aa5df"/><polygon points="2,19.500 12.500,19.500 16,16 16,18.500 12.500,22 2,22" fill="#cfcfcf"/><path d="M20,18 V5" stroke="#222" stroke-width="1.200"/><path d="M18.200,6.300 L20,2.500 L21.800,6.300 Z" fill="#222"/></svg>
<div class="abs" style="left:311px;top:1011px;width:2px;height:7px;background:#c9c9c9"></div>
<svg class="abs" style="left:301.5px;top:987px" width="24" height="22" viewBox="0 0 24 22"><path d="M2.500,3 H18 V11 M2.500,3 V18.200 H11.500" fill="none" stroke="#333" stroke-width="1.100" stroke-dasharray="6.500 2.500"/><rect x="1.1" y="1.6" width="2.800" height="2.800" fill="#1a8fe6"/><rect x="16.6" y="1.6" width="2.800" height="2.800" fill="#1a8fe6"/><rect x="1.1" y="16.8" width="2.800" height="2.800" fill="#1a8fe6"/><path d="M11.300,19.800 L12.500,16.700 L18.300,11.500 L20.600,14 L14.700,19.200 Z" fill="#f4b942"/><path d="M18.300,11.500 L19.500,10.500 Q20.800,9.900 21.600,11.200 Q22,12.500 20.600,14 Z" fill="#f04646"/><path d="M11.300,19.800 L12.500,16.700 L14.700,19.200 Z" fill="#555"/></svg>
<div class="abs" style="left:341px;top:1011px;width:2px;height:7px;background:#c9c9c9"></div>
<svg class="abs" style="left:331px;top:986px" width="24" height="24" viewBox="0 0 24 24"><polygon points="2,6.500 5.500,3 16,3 12.500,6.500" fill="#8ecbf8"/><polygon points="12.500,6.500 16,3 16,16 12.500,19.500" fill="#3f8fcf"/><rect x="2" y="6.500" width="10.500" height="13" fill="#5aa5df"/><polygon points="2,19.500 12.500,19.500 16,16 16,18.500 12.500,22 2,22" fill="#cfcfcf"/><path d="M20,18 V5" stroke="#222" stroke-width="1.200"/><path d="M18.200,6.300 L20,2.500 L21.800,6.300 Z" fill="#222"/></svg>
<div class="abs" style="left:371px;top:1011px;width:2px;height:7px;background:#c9c9c9"></div>
<svg class="abs" style="left:362px;top:987px" width="20" height="22" viewBox="0 0 20 22"><path d="M8.500,3.500 V19.500 H1.500 Z" fill="#f6f6f6" stroke="#555" stroke-width="1.100" stroke-linejoin="round"/><path d="M11,2 V20 H19 Z" fill="#5aa5df"/></svg>
<div class="abs" style="left:401px;top:1011px;width:2px;height:7px;background:#c9c9c9"></div>
<svg class="abs" style="left:391.5px;top:987px" width="24" height="22" viewBox="0 0 24 22"><path d="M2.500,3 H18 V11 M2.500,3 V18.200 H11.500" fill="none" stroke="#333" stroke-width="1.100" stroke-dasharray="6.500 2.500"/><rect x="1.1" y="1.6" width="2.800" height="2.800" fill="#1a8fe6"/><rect x="16.6" y="1.6" width="2.800" height="2.800" fill="#1a8fe6"/><rect x="1.1" y="16.8" width="2.800" height="2.800" fill="#1a8fe6"/><path d="M11.300,19.800 L12.500,16.700 L18.300,11.500 L20.600,14 L14.700,19.200 Z" fill="#f4b942"/><path d="M18.300,11.500 L19.500,10.500 Q20.800,9.900 21.600,11.200 Q22,12.500 20.600,14 Z" fill="#f04646"/><path d="M11.300,19.800 L12.500,16.700 L14.700,19.200 Z" fill="#555"/></svg>
<div class="abs" style="left:431px;top:1011px;width:2px;height:7px;background:#c9c9c9"></div>
<svg class="abs" style="left:421px;top:986px" width="24" height="24" viewBox="0 0 24 24"><polygon points="2,6.500 5.500,3 16,3 12.500,6.500" fill="#8ecbf8"/><polygon points="12.500,6.500 16,3 16,16 12.500,19.500" fill="#3f8fcf"/><rect x="2" y="6.500" width="10.500" height="13" fill="#5aa5df"/><polygon points="2,19.500 12.500,19.500 16,16 16,18.500 12.500,22 2,22" fill="#cfcfcf"/><path d="M20,18 V5" stroke="#222" stroke-width="1.200"/><path d="M18.200,6.300 L20,2.500 L21.800,6.300 Z" fill="#222"/></svg>
<div class="abs" style="left:461px;top:1011px;width:2px;height:7px;background:#c9c9c9"></div>
<svg class="abs" style="left:451px;top:986px" width="24" height="24" viewBox="0 0 24 24"><polygon points="2,6.500 5.500,3 16,3 12.500,6.500" fill="#8ecbf8"/><polygon points="12.500,6.500 16,3 16,16 12.500,19.500" fill="#3f8fcf"/><rect x="2" y="6.500" width="10.500" height="13" fill="#5aa5df"/><polygon points="2,19.500 12.500,19.500 16,16 16,18.500 12.500,22 2,22" fill="#cfcfcf"/><path d="M20,18 V5" stroke="#222" stroke-width="1.200"/><path d="M18.200,6.300 L20,2.500 L21.800,6.300 Z" fill="#222"/></svg>
<div class="abs" style="left:491px;top:1011px;width:2px;height:7px;background:#c9c9c9"></div>
<svg class="abs" style="left:482px;top:987px" width="20" height="22" viewBox="0 0 20 22"><path d="M8.500,3.500 V19.500 H1.500 Z" fill="#f6f6f6" stroke="#555" stroke-width="1.100" stroke-linejoin="round"/><path d="M11,2 V20 H19 Z" fill="#5aa5df"/></svg>
<div class="abs" style="left:521px;top:1011px;width:2px;height:7px;background:#c9c9c9"></div>
<svg class="abs" style="left:511.5px;top:987px" width="24" height="22" viewBox="0 0 24 22"><path d="M2.500,3 H18 V11 M2.500,3 V18.200 H11.500" fill="none" stroke="#333" stroke-width="1.100" stroke-dasharray="6.500 2.500"/><rect x="1.1" y="1.6" width="2.800" height="2.800" fill="#1a8fe6"/><rect x="16.6" y="1.6" width="2.800" height="2.800" fill="#1a8fe6"/><rect x="1.1" y="16.8" width="2.800" height="2.800" fill="#1a8fe6"/><path d="M11.300,19.800 L12.500,16.700 L18.300,11.500 L20.600,14 L14.700,19.200 Z" fill="#f4b942"/><path d="M18.300,11.500 L19.500,10.500 Q20.800,9.900 21.600,11.200 Q22,12.500 20.600,14 Z" fill="#f04646"/><path d="M11.300,19.800 L12.500,16.700 L14.700,19.200 Z" fill="#555"/></svg>
<div class="abs" style="left:551px;top:1011px;width:2px;height:7px;background:#c9c9c9"></div>
<svg class="abs" style="left:541px;top:986px" width="24" height="24" viewBox="0 0 24 24"><polygon points="2,6.500 5.500,3 16,3 12.500,6.500" fill="#8ecbf8"/><polygon points="12.500,6.500 16,3 16,16 12.500,19.500" fill="#3f8fcf"/><rect x="2" y="6.500" width="10.500" height="13" fill="#5aa5df"/><polygon points="2,19.500 12.500,19.500 16,16 16,18.500 12.500,22 2,22" fill="#cfcfcf"/><path d="M20,18 V5" stroke="#222" stroke-width="1.200"/><path d="M18.200,6.300 L20,2.500 L21.800,6.300 Z" fill="#222"/></svg>
<div class="abs" style="left:581px;top:1011px;width:2px;height:7px;background:#c9c9c9"></div>
<svg class="abs" style="left:571px;top:986px" width="24" height="24" viewBox="0 0 24 24"><polygon points="2,6.500 5.500,3 16,3 12.500,6.500" fill="#8ecbf8"/><polygon points="12.500,6.500 16,3 16,16 12.500,19.500" fill="#3f8fcf"/><rect x="2" y="6.500" width="10.500" height="13" fill="#5aa5df"/><polygon points="2,19.500 12.500,19.500 16,16 16,18.500 12.500,22 2,22" fill="#cfcfcf"/><path d="M20,18 V5" stroke="#222" stroke-width="1.200"/><path d="M18.200,6.300 L20,2.500 L21.800,6.300 Z" fill="#222"/></svg>
<div class="abs" style="left:611px;top:1011px;width:2px;height:7px;background:#c9c9c9"></div>
<div class="abs" style="left:597.500px;top:982.500px;width:29px;height:30px;background:#0696d7;border-radius:3px"></div>
<svg class="abs" style="left:601.5px;top:987px" width="24" height="22" viewBox="0 0 24 22"><path d="M2.500,3 H18 V11 M2.500,3 V18.200 H11.500" fill="none" stroke="#0c4a78" stroke-width="1.100" stroke-dasharray="6.500 2.500"/><rect x="1.1" y="1.6" width="2.800" height="2.800" fill="#0c4a78"/><rect x="16.6" y="1.6" width="2.800" height="2.800" fill="#0c4a78"/><rect x="1.1" y="16.8" width="2.800" height="2.800" fill="#0c4a78"/><path d="M11.300,19.800 L12.500,16.700 L18.300,11.500 L20.600,14 L14.700,19.200 Z" fill="#f4b942"/><path d="M18.300,11.500 L19.500,10.500 Q20.800,9.900 21.600,11.200 Q22,12.500 20.600,14 Z" fill="#f04646"/><path d="M11.300,19.800 L12.500,16.700 L14.700,19.200 Z" fill="#555"/></svg>
<svg class="abs" style="left:618px;top:978px" width="20" height="44" viewBox="0 0 20 44"><path d="M2,2 H17 V4 L10.800,9 V42 H8.200 V9 L2,4 Z" fill="#666"/></svg>
<svg class="abs" style="left:1882px;top:987px" width="24" height="24" viewBox="0 0 24 24"><rect x="9.500" y="1" width="5" height="22" rx="1" transform="rotate(0 12 12)" fill="#8a8a8a"/><rect x="9.500" y="1" width="5" height="22" rx="1" transform="rotate(45 12 12)" fill="#8a8a8a"/><rect x="9.500" y="1" width="5" height="22" rx="1" transform="rotate(90 12 12)" fill="#8a8a8a"/><rect x="9.500" y="1" width="5" height="22" rx="1" transform="rotate(135 12 12)" fill="#8a8a8a"/><circle cx="12" cy="12" r="8" fill="#8a8a8a"/><circle cx="12" cy="12" r="3.600" fill="#f1f1f1"/></svg>
<!-- p_taskbar -->
<div class="abs" id="taskbar"></div>
<svg class="abs" style="left:20px;top:1044px" width="21" height="21" viewBox="0 0 21 21"><path d="M0,3 L8.800,1.700 V9.800 H0 Z M10,1.500 L20.500,0 V9.800 H10 Z M0,11 H8.800 V19.200 L0,18 Z M10,11 H20.500 V21 L10,19.400 Z" fill="#fff"/></svg>
<div class="abs" style="left:60px;top:1030px;width:360px;height:50px;background:#323232;border:1px solid #4c4c4c;border-bottom:0"></div>
<svg class="abs" style="left:72px;top:1040px" width="28" height="28" viewBox="0 0 28 28"><circle cx="16" cy="11" r="6.800" fill="none" stroke="#f0f0f0" stroke-width="1.600"/><path d="M11.200,16 L3.500,24" stroke="#f0f0f0" stroke-width="1.800"/></svg>
<div class="t" style="left:110.80px;top:1046.32px;font-size:19px;color:#ececec;transform:scaleX(0.9707);transform-origin:0 50%;">Type here to search</div>
<div class="abs" style="left:325px;top:1035px;width:90px;height:40px;background:#1d2b38;border-radius:9px"></div>
<div class="t" style="left:348.00px;top:1047.34px;font-size:12px;color:#1c80d8;font-weight:bold;font-style:italic;transform:scaleX(1.0679);transform-origin:0 50%;">Amsted</div>
<div class="t" style="left:350.50px;top:1057.05px;font-size:4.6px;color:#1c80d8;font-weight:bold;letter-spacing:1.2px;transform:scaleX(1.1166);transform-origin:0 50%;">INDUSTRIES</div>
<div class="abs" style="left:404.500px;top:1034.500px;width:12px;height:12px;border-radius:50%;background:#4fc3f7;border:1.500px solid #323232"></div>
<svg class="abs" style="left:438px;top:1043px" width="26" height="24" viewBox="0 0 26 24"><rect x="3" y="5.500" width="11" height="11" fill="none" stroke="#fff" stroke-width="1.500"/><path d="M2,2 H15 M2,20 H15" stroke="#fff" stroke-width="1.500"/><path d="M19.500,2 V7.500 M19.500,10 V20" stroke="#fff" stroke-width="1.500"/><rect x="18" y="7.500" width="3" height="2.500" fill="#fff"/></svg>
<div class="abs" style="left:489px;top:1077px;width:51px;height:3px;background:#76b9ed"></div>
<div class="abs" style="left:675px;top:1077px;width:51px;height:3px;background:#76b9ed"></div>
<div class="abs" style="left:985px;top:1077px;width:51px;height:3px;background:#76b9ed"></div>
<div class="abs" style="left:1109px;top:1077px;width:51px;height:3px;background:#76b9ed"></div>
<div class="abs" style="left:1166px;top:1030px;width:61px;height:50px;background:#66686d"></div>
<div class="abs" style="left:1166px;top:1077px;width:61px;height:3px;background:#76b9ed"></div>
<svg class="abs" style="left:499px;top:1041px" width="30" height="27" viewBox="0 0 30 27"><path d="M1,3 Q1,1.500 2.500,1.500 H10.500 L13,4.500 H27.500 Q29,4.500 29,6 V22 H1 Z" fill="#f2b23a"/><path d="M1,8 H29 V23.500 Q29,25 27.500,25 H2.500 Q1,25 1,23.500 Z" fill="#fcd462"/><path d="M7,25 V17.500 Q7,16 8.500,16 H21.500 Q23,16 23,17.500 V25 H19 V20 H11 V25 Z" fill="#3a96dd"/></svg>
<svg class="abs" style="left:558px;top:1036px" width="38" height="38" viewBox="0 0 38 38"><path d="M7.5,27 Q-1,37 12,30.500" fill="none" stroke="#f2bd2f" stroke-width="2.400"/><text x="19.500" y="31.200" text-anchor="middle" font-family="Liberation Sans,Arial,sans-serif" font-size="49" font-weight="bold" fill="#3fbdf1">e</text><path d="M10,9.500 Q22,1.500 29.500,4 Q35,7 29,17" fill="none" stroke="#f2bd2f" stroke-width="2.400"/></svg>
<svg class="abs" style="left:623px;top:1040px" width="30" height="30" viewBox="0 0 30 30"><rect x="13" y="7" width="15.500" height="14.500" fill="#fff"/><path d="M13,7 L20.700,14 L28.500,7" fill="none" stroke="#0f6fc6" stroke-width="1.800"/><rect x="13" y="7" width="15.500" height="14.500" fill="none" stroke="#0f6fc6" stroke-width="1.500"/><path d="M1,4 L17,1 V29 L1,26 Z" fill="#0f6fc6"/><ellipse cx="8.500" cy="15" rx="3.600" ry="4.800" fill="none" stroke="#fff" stroke-width="2.300"/></svg>
<svg class="abs" style="left:684px;top:1038px" width="33" height="33" viewBox="0 0 33 33"><circle cx="16" cy="16.500" r="15" fill="#de4a3b"/><path d="M16,16.500 L3,24 A15,15 0 0 0 16,31.500 L23,20.500 Z" fill="#2fa04d"/><path d="M3,9 A15,15 0 0 0 3,24 L16,31.500 A15,15 0 0 1 3.500,9 Z" fill="#2fa04d" opacity="0"/><path d="M2.900,9.200 A15,15 0 0 0 16,31.500 L22.500,20.300 L9.500,20.300 Z" fill="#2fa04d"/><path d="M29,9 A15,15 0 0 1 16,31.500 L22.500,20.300 L22.500,9 Z" fill="#fbc531"/><path d="M16,9 H29.100 A15,15 0 0 1 16,31.500 L22.600,20.200 Z" fill="#fbc531"/><circle cx="16" cy="16.500" r="7.300" fill="#fff"/><circle cx="16" cy="16.500" r="5.800" fill="#4688f1"/></svg>
<svg class="abs" style="left:747px;top:1038px" width="30" height="32" viewBox="0 0 30 32"><path d="M1,3 L23,1 V7 L12,15 L7,29 L1,26 Z" fill="#1d5fa8"/><path d="M3,4.500 L21,3" stroke="#6fa3d8" stroke-width="1.500"/><path d="M10,11 H21 Q27,5 26.500,1 Q31,14 24,22 Q19,28 11,29.500 Q14,26 15.500,21 H10 Z" fill="#f9b215"/><path d="M21,11 Q25,8 26.500,2 Q29,12 23,19 Z" fill="#f08a10"/></svg>
<svg class="abs" style="left:808px;top:1039px" width="31" height="31" viewBox="0 0 31 31"><path d="M7,1 H30 V22.500 L22.500,30 H1 V7 Z" fill="#b3d334"/><path d="M23.500,7.500 H12 Q8,7.500 8,11.500 V19.500 Q8,23.500 12,23.500 H23.500 V19 H14 V12 H23.500 Z" fill="#0a0a0a"/></svg>
<svg class="abs" style="left:870px;top:1039px" width="34" height="32" viewBox="0 0 34 32"><ellipse cx="17" cy="11" rx="14" ry="8.500" fill="#f4f4f4" stroke="#d9413a" stroke-width="1.800"/><path d="M5,14 Q10,21 19,20 L22,15 Z" fill="#9a9a9a"/><path d="M12,3 L22,22 M24,4 L15,21" stroke="#888" stroke-width="1.600"/><circle cx="24" cy="26" r="3.400" fill="none" stroke="#2f8fdf" stroke-width="2"/><circle cx="14.500" cy="26.500" r="3.400" fill="none" stroke="#2f8fdf" stroke-width="2"/></svg>
<svg class="abs" style="left:933px;top:1040px" width="30" height="30" viewBox="0 0 30 30"><rect width="30" height="30" fill="#f6e3dc"/><path d="M4,27 L13.500,4 H18 L27,27 H21.500 L15.700,10.500 L11.500,22 H17 L18,24.500 L8,27 Z" fill="#c8202c"/><path d="M4,27 L13.500,4 L15,6 L8,27 Z" fill="#8f1420"/></svg>
<svg class="abs" style="left:995px;top:1040px" width="30" height="30" viewBox="0 0 30 30"><rect width="30" height="30" fill="#d9eef8"/><text x="15" y="15" text-anchor="middle" font-family="Liberation Sans,Arial,sans-serif" font-size="17" font-weight="bold" fill="#e0202c" textLength="27" lengthAdjust="spacingAndGlyphs">TL75</text><path d="M3,22 H27 M11,16.500 V27 M16.500,16.500 V27 M14,27 L22,16.500" stroke="#333" stroke-width="1.100" fill="none"/></svg>
<svg class="abs" style="left:1056px;top:1038px" width="33" height="33" viewBox="0 0 33 33"><defs><linearGradient id="edg" x1="0" y1="0" x2="1" y2="1"><stop offset="0" stop-color="#35c1b5"/><stop offset=".5" stop-color="#2fbf62"/><stop offset="1" stop-color="#7fd64a"/></linearGradient></defs><circle cx="16.500" cy="16.500" r="15" fill="#1b6fc4"/><path d="M2,13 Q5,1.500 17,1.500 Q30,2 31.500,15 Q31,22 24,22 Q19,22 19.500,18 Q20,14 15.500,13 Q8,12 2,13 Z" fill="url(#edg)"/><path d="M1.800,14 Q9,9 15,13 Q11,17 12,22 Q14,30 24,29 Q19,33 12,31 Q1,27 1.800,14 Z" fill="#0f4d9c"/><path d="M12,21 Q13,30 24,29 Q29,27 30.500,22.500 Q24,27 18,24.500 Q13.500,22.500 15,17 Z" fill="#2b8fe0"/></svg>
<svg class="abs" style="left:1120px;top:1041px" width="28" height="28" viewBox="0 0 28 28"><rect width="28" height="28" fill="#dcedf6"/><text x="14" y="14" text-anchor="middle" font-family="Liberation Sans,Arial,sans-serif" font-size="16.5" font-weight="bold" fill="#e0202c" textLength="25" lengthAdjust="spacingAndGlyphs">TL75</text><text x="14" y="25.500" text-anchor="middle" font-family="Liberation Sans,Arial,sans-serif" font-size="12" font-weight="bold" fill="#222" textLength="24" lengthAdjust="spacingAndGlyphs">EDU</text></svg>
<svg class="abs" style="left:1182px;top:1040px" width="29" height="30" viewBox="0 0 29 30"><path d="M3.500,0 H20 L28,6.500 V27 Q28,30 25,30 H3.500 Q0.500,30 0.500,27 V3 Q0.500,0 3.500,0 Z" fill="#ff6b00"/><path d="M20,0 L28,6.500 H20 Z" fill="#ff9440"/><path d="M4,20.500 H28 V27 Q28,30 25,30 H7 Q4,30 4,27 Z" fill="#a84300"/><text x="14.500" y="17.500" text-anchor="middle" font-family="Liberation Sans,Arial,sans-serif" font-size="17" font-weight="bold" fill="#fff">F</text><text x="16" y="28" text-anchor="middle" font-family="Liberation Sans,Arial,sans-serif" font-size="6.500" font-weight="bold" fill="#ffd2ae">360</text></svg>
<svg class="abs" style="left:1494px;top:1044px" width="32" height="22" viewBox="0 0 32 22"><defs><linearGradient id="cl" x1="0" y1="0" x2="0" y2="1"><stop offset="0" stop-color="#f4f8ff"/><stop offset="1" stop-color="#9fb8e6"/></linearGradient></defs><path d="M7,20 Q1,20 1,14.500 Q1,9.500 6.500,9.500 Q8,2 15.500,2 Q21.500,2 23.500,8 Q31,8 31,14.500 Q31,20 25,20 Z" fill="url(#cl)"/></svg>
<div class="t" style="left:1535.00px;top:1047.26px;font-size:18.5px;color:#fff;transform:scaleX(0.9038);transform-origin:0 50%;">47°F</div>
<div class="t" style="left:1580.50px;top:1047.26px;font-size:18.5px;color:#fff;transform:scaleX(0.9464);transform-origin:0 50%;">Cloudy</div>
<svg class="abs" style="left:1656px;top:1046px" width="18" height="16" viewBox="0 0 18 16"><path d="M1.500,12 L9,4.500 L16.500,12" fill="none" stroke="#fff" stroke-width="1.500"/></svg>
<svg class="abs" style="left:1684px;top:1046px" width="24" height="18" viewBox="0 0 24 18"><rect x="5" y="4.500" width="15.500" height="9.500" fill="#fff" stroke="#fff" stroke-width="1"/><rect x="21" y="7" width="1.500" height="4.500" fill="#fff"/><path d="M3,1 V4 M1.500,4 H4.500 V7 Q3,8.500 1.500,7 Z" stroke="#fff" stroke-width="1" fill="#fff"/></svg>
<svg class="abs" style="left:1716px;top:1045px" width="20" height="20" viewBox="0 0 20 20"><path d="M2.500,16 A13.500,13.500 0 0 1 16,2.500 M6.500,16 A9.500,9.500 0 0 1 16,6.500 M10.500,16 A5.500,5.500 0 0 1 16,10.500" fill="none" stroke="#fff" stroke-width="1.300" stroke-opacity=".9"/><circle cx="15" cy="15.500" r="1.600" fill="#fff"/></svg>
<svg class="abs" style="left:1744px;top:1045px" width="24" height="20" viewBox="0 0 24 20"><path d="M2,7 H5.500 L10,2.500 V17.500 L5.500,13 H2 Z" fill="none" stroke="#fff" stroke-width="1.200" stroke-linejoin="round"/><path d="M13,7 Q15,10 13,13" fill="none" stroke="#fff" stroke-width="1.100"/><path d="M16,5 Q19,10 16,15" fill="none" stroke="#aaa" stroke-width="1"/><path d="M19,3 Q23,10 19,17" fill="none" stroke="#888" stroke-width="1"/></svg>
<div class="t" style="left:1782.70px;top:1036.47px;font-size:15px;color:#fff;transform:scaleX(0.9111);transform-origin:0 50%;">10:44 PM</div>
<div class="t" style="left:1782.70px;top:1059.27px;font-size:15px;color:#fff;">2/5/2023</div>
<svg class="abs" style="left:1866px;top:1043px" width="36" height="34" viewBox="0 0 36 34"><path d="M3,2.500 H23.500 V19 H11 V24 L6,19 H3 Z" fill="#fff"/><path d="M7,7.500 H19.500 M7,11 H19.500 M7,14.500 H19.500" stroke="#414348" stroke-width="1.400"/><circle cx="23" cy="22" r="9.500" fill="#414348" stroke="#6a6c70" stroke-width="1.200"/><text x="23" y="27.500" text-anchor="middle" font-family="Liberation Sans,Arial,sans-serif" font-size="15" fill="#fff">4</text></svg>
<div class="abs" style="left:1913.500px;top:1030px;width:1px;height:50px;background:#8a8a8a"></div>
</body></html>
